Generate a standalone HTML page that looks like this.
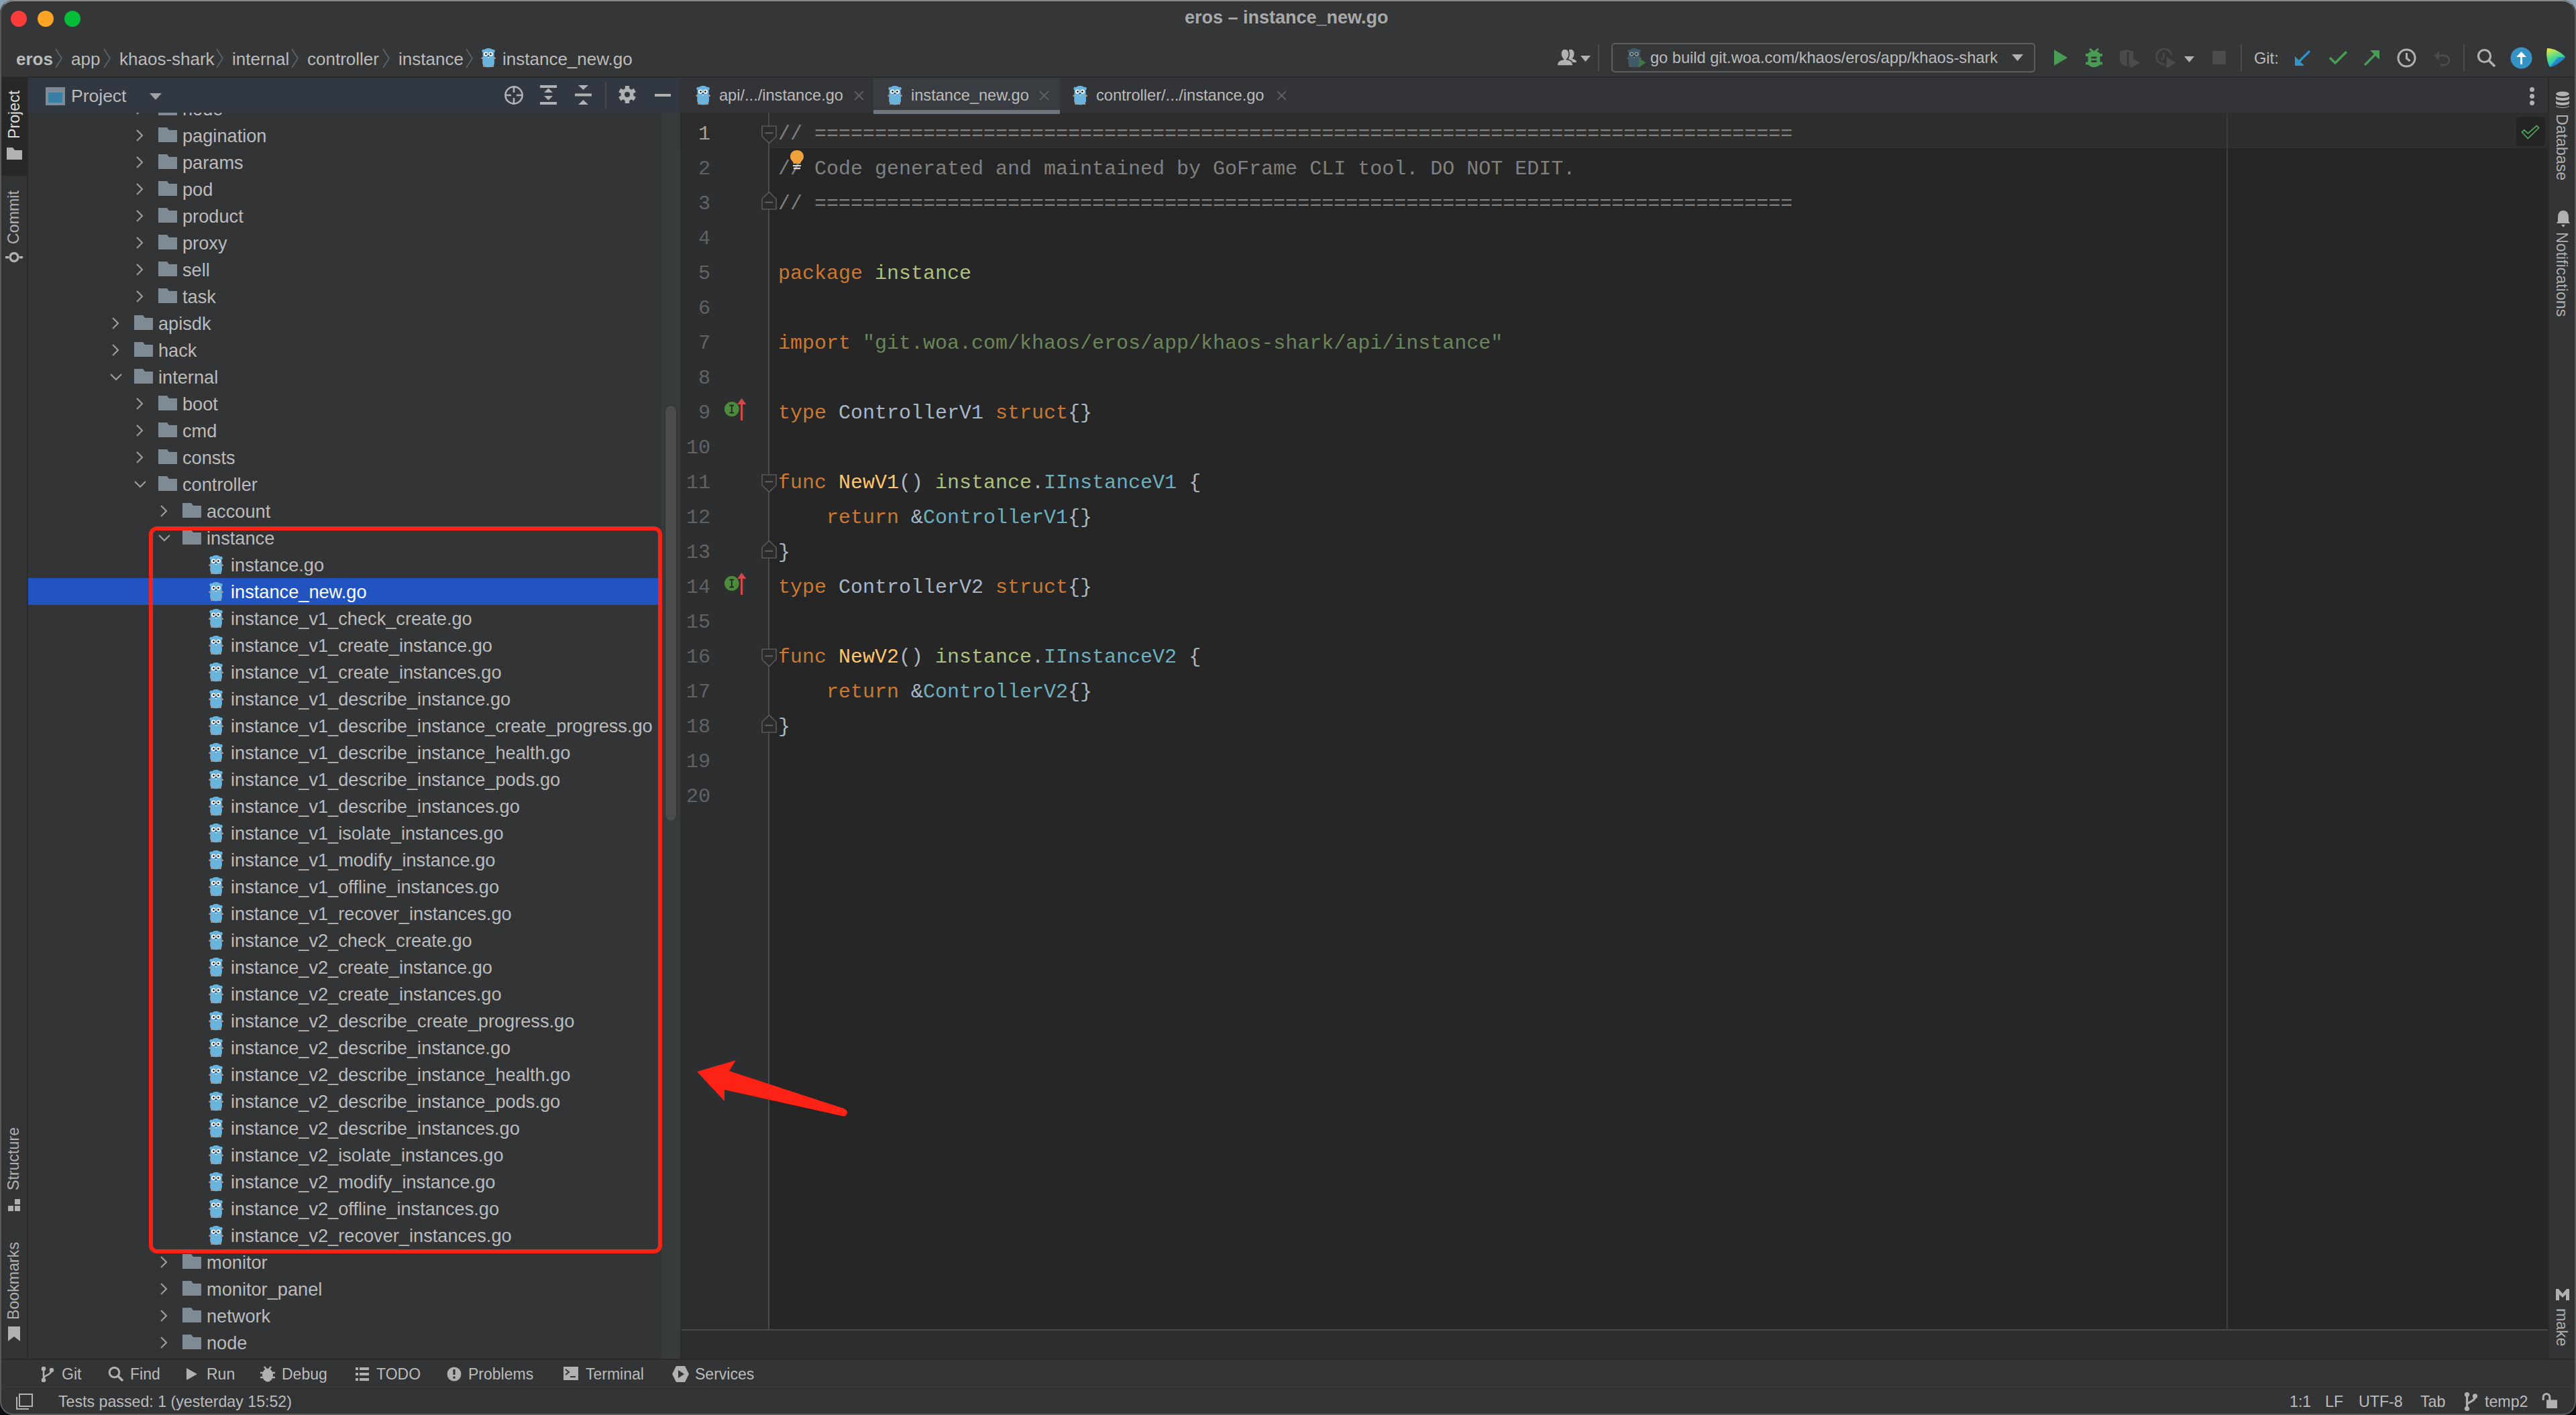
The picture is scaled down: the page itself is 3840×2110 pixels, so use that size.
<!DOCTYPE html><html><head><meta charset="utf-8"><style>html,body{margin:0;padding:0;background:linear-gradient(#8ca0b4 0,#8ca0b4 50%,#0a0e12 50%);overflow:hidden;width:3840px;height:2110px}</style></head><body>
<div style="position:absolute;left:0;top:0;width:3840px;height:2110px;background:#353638;border-radius:20px;overflow:hidden;">
<div style="position:absolute;left:0px;top:0px;width:3840px;height:114px;background:#353638;"></div>
<div style="position:absolute;left:0px;top:0px;width:3840px;height:2px;background:#6a6a6a;"></div>
<div style="position:absolute;left:16px;top:16px;width:24px;height:24px;border-radius:50%;background:#fd3c3c"></div>
<div style="position:absolute;left:56px;top:16px;width:24px;height:24px;border-radius:50%;background:#fda425"></div>
<div style="position:absolute;left:96px;top:16px;width:24px;height:24px;border-radius:50%;background:#03bd38"></div>
<div style="position:absolute;left:1766px;top:11px;font:bold 27px/30px 'Liberation Sans', sans-serif;color:#a9a9aa;white-space:pre;">eros – instance_new.go</div>
<div style="position:absolute;left:24px;top:74px;font:bold 26px/28px 'Liberation Sans', sans-serif;color:#bbbbbb;white-space:pre;">eros</div>
<div style="position:absolute;left:106px;top:74px;font:normal 26px/28px 'Liberation Sans', sans-serif;color:#bbbbbb;white-space:pre;">app</div>
<div style="position:absolute;left:178px;top:74px;font:normal 26px/28px 'Liberation Sans', sans-serif;color:#bbbbbb;white-space:pre;">khaos-shark</div>
<div style="position:absolute;left:346px;top:74px;font:normal 26px/28px 'Liberation Sans', sans-serif;color:#bbbbbb;white-space:pre;">internal</div>
<div style="position:absolute;left:458px;top:74px;font:normal 26px/28px 'Liberation Sans', sans-serif;color:#bbbbbb;white-space:pre;">controller</div>
<div style="position:absolute;left:594px;top:74px;font:normal 26px/28px 'Liberation Sans', sans-serif;color:#bbbbbb;white-space:pre;">instance</div>
<svg style="position:absolute;left:82px;top:72px;" width="12" height="30" viewBox="0 0 12 30"><polyline points="1,1 10,15 1,29" fill="none" stroke="#5b6369" stroke-width="1.8"/></svg>
<svg style="position:absolute;left:154px;top:72px;" width="12" height="30" viewBox="0 0 12 30"><polyline points="1,1 10,15 1,29" fill="none" stroke="#5b6369" stroke-width="1.8"/></svg>
<svg style="position:absolute;left:322px;top:72px;" width="12" height="30" viewBox="0 0 12 30"><polyline points="1,1 10,15 1,29" fill="none" stroke="#5b6369" stroke-width="1.8"/></svg>
<svg style="position:absolute;left:434px;top:72px;" width="12" height="30" viewBox="0 0 12 30"><polyline points="1,1 10,15 1,29" fill="none" stroke="#5b6369" stroke-width="1.8"/></svg>
<svg style="position:absolute;left:570px;top:72px;" width="12" height="30" viewBox="0 0 12 30"><polyline points="1,1 10,15 1,29" fill="none" stroke="#5b6369" stroke-width="1.8"/></svg>
<svg style="position:absolute;left:694px;top:72px;" width="12" height="30" viewBox="0 0 12 30"><polyline points="1,1 10,15 1,29" fill="none" stroke="#5b6369" stroke-width="1.8"/></svg>
<svg style="position:absolute;left:717px;top:71px;" width="23" height="31" viewBox="-2 -1 23 31"><circle cx="1.8" cy="4.2" r="2.4" fill="#6ab3dd"/><circle cx="16.4" cy="4.2" r="2.4" fill="#6ab3dd"/><path d="M0.6,9 C0.6,2.5 4,0 9.1,0 C14.2,0 17.6,2.5 17.6,9 L18,21 C18,27.5 14,28.2 9.1,28.2 C4.2,28.2 0.2,27.5 0.2,21 Z" fill="#6ab3dd"/><circle cx="5.2" cy="8.6" r="3.1" fill="#fff"/><circle cx="12.7" cy="8.6" r="3.1" fill="#fff"/><circle cx="5.5" cy="8.6" r="1.35" fill="#000"/><circle cx="12.4" cy="8.6" r="1.35" fill="#000"/><ellipse cx="9" cy="11.8" rx="1.4" ry="1" fill="#1a1a1a"/><rect x="8.2" y="12.6" width="1.8" height="1.6" fill="#f2f2f2"/><circle cx="-0.3" cy="14.8" r="1.4" fill="#c9967a"/><circle cx="18.5" cy="14.8" r="1.4" fill="#c9967a"/><circle cx="2.5" cy="26.8" r="1.4" fill="#c9967a"/><circle cx="15.7" cy="26.8" r="1.4" fill="#c9967a"/></svg>
<div style="position:absolute;left:749px;top:74px;font:normal 26px/28px 'Liberation Sans', sans-serif;color:#bbbbbb;white-space:pre;">instance_new.go</div>
<div style="position:absolute;left:0px;top:114px;width:3840px;height:2px;background:#2a2a2a;"></div>
<div style="position:absolute;left:0px;top:116px;width:40px;height:1910px;background:#333436;"></div>
<div style="position:absolute;left:2px;top:116px;width:38px;height:146px;background:#282828;"></div>
<div style="position:absolute;left:40px;top:116px;width:2px;height:1910px;background:#2b2b2b;"></div>
<div style="position:absolute;left:42px;top:116px;width:972px;height:52px;background:#313842;"></div>
<div style="position:absolute;left:42px;top:168px;width:972px;height:1858px;background:#333436;"></div>
<div style="position:absolute;left:986px;top:168px;width:28px;height:1858px;background:#383b3c;"></div>
<div style="position:absolute;left:1014px;top:116px;width:2784px;height:52px;background:#333437;"></div>
<div style="position:absolute;left:1014px;top:168px;width:132px;height:1815px;background:#2d2e30;"></div>
<div style="position:absolute;left:1146px;top:168px;width:2652px;height:1815px;background:#262626;"></div>
<div style="position:absolute;left:1014px;top:1983px;width:2784px;height:43px;background:#2c2d2f;"></div>
<div style="position:absolute;left:1016px;top:1982px;width:2782px;height:2px;background:#4a4a4a;"></div>
<div style="position:absolute;left:1145px;top:168px;width:2px;height:1815px;background:#4a4a4a;"></div>
<div style="position:absolute;left:3798px;top:116px;width:42px;height:1910px;background:#333436;"></div>
<div style="position:absolute;left:3798px;top:116px;width:2px;height:1910px;background:#2b2b2c;"></div>
<div style="position:absolute;left:0px;top:2026px;width:3840px;height:42px;background:#333436;"></div>
<div style="position:absolute;left:0px;top:2026px;width:3840px;height:2px;background:#2a2a2a;"></div>
<div style="position:absolute;left:0px;top:2068px;width:3840px;height:42px;background:#333436;"></div>
<div style="position:absolute;left:0px;top:2068px;width:3840px;height:1px;background:#3a3b3d;"></div>
<div style="position:absolute;left:42px;top:168px;width:944px;height:1858px;overflow:hidden">
<svg style="position:absolute;left:160px;top:-16px;" width="12" height="20" viewBox="0 0 12 20"><polyline points="2,2 10,10 2,18" fill="none" stroke="#9a9da0" stroke-width="2.2"/></svg>
<svg style="position:absolute;left:194px;top:-18px;" width="28" height="22" viewBox="0 0 28 22"><path d="M0,0 H13 L16,4 H28 V22 H0 Z" fill="#7f8b94"/></svg>
<div style="position:absolute;left:230px;top:-21px;font:normal 27.2px/32px 'Liberation Sans', sans-serif;color:#bbbbbb;white-space:pre;">node</div>
<svg style="position:absolute;left:160px;top:24px;" width="12" height="20" viewBox="0 0 12 20"><polyline points="2,2 10,10 2,18" fill="none" stroke="#9a9da0" stroke-width="2.2"/></svg>
<svg style="position:absolute;left:194px;top:22px;" width="28" height="22" viewBox="0 0 28 22"><path d="M0,0 H13 L16,4 H28 V22 H0 Z" fill="#7f8b94"/></svg>
<div style="position:absolute;left:230px;top:19px;font:normal 27.2px/32px 'Liberation Sans', sans-serif;color:#bbbbbb;white-space:pre;">pagination</div>
<svg style="position:absolute;left:160px;top:64px;" width="12" height="20" viewBox="0 0 12 20"><polyline points="2,2 10,10 2,18" fill="none" stroke="#9a9da0" stroke-width="2.2"/></svg>
<svg style="position:absolute;left:194px;top:62px;" width="28" height="22" viewBox="0 0 28 22"><path d="M0,0 H13 L16,4 H28 V22 H0 Z" fill="#7f8b94"/></svg>
<div style="position:absolute;left:230px;top:59px;font:normal 27.2px/32px 'Liberation Sans', sans-serif;color:#bbbbbb;white-space:pre;">params</div>
<svg style="position:absolute;left:160px;top:104px;" width="12" height="20" viewBox="0 0 12 20"><polyline points="2,2 10,10 2,18" fill="none" stroke="#9a9da0" stroke-width="2.2"/></svg>
<svg style="position:absolute;left:194px;top:102px;" width="28" height="22" viewBox="0 0 28 22"><path d="M0,0 H13 L16,4 H28 V22 H0 Z" fill="#7f8b94"/></svg>
<div style="position:absolute;left:230px;top:99px;font:normal 27.2px/32px 'Liberation Sans', sans-serif;color:#bbbbbb;white-space:pre;">pod</div>
<svg style="position:absolute;left:160px;top:144px;" width="12" height="20" viewBox="0 0 12 20"><polyline points="2,2 10,10 2,18" fill="none" stroke="#9a9da0" stroke-width="2.2"/></svg>
<svg style="position:absolute;left:194px;top:142px;" width="28" height="22" viewBox="0 0 28 22"><path d="M0,0 H13 L16,4 H28 V22 H0 Z" fill="#7f8b94"/></svg>
<div style="position:absolute;left:230px;top:139px;font:normal 27.2px/32px 'Liberation Sans', sans-serif;color:#bbbbbb;white-space:pre;">product</div>
<svg style="position:absolute;left:160px;top:184px;" width="12" height="20" viewBox="0 0 12 20"><polyline points="2,2 10,10 2,18" fill="none" stroke="#9a9da0" stroke-width="2.2"/></svg>
<svg style="position:absolute;left:194px;top:182px;" width="28" height="22" viewBox="0 0 28 22"><path d="M0,0 H13 L16,4 H28 V22 H0 Z" fill="#7f8b94"/></svg>
<div style="position:absolute;left:230px;top:179px;font:normal 27.2px/32px 'Liberation Sans', sans-serif;color:#bbbbbb;white-space:pre;">proxy</div>
<svg style="position:absolute;left:160px;top:224px;" width="12" height="20" viewBox="0 0 12 20"><polyline points="2,2 10,10 2,18" fill="none" stroke="#9a9da0" stroke-width="2.2"/></svg>
<svg style="position:absolute;left:194px;top:222px;" width="28" height="22" viewBox="0 0 28 22"><path d="M0,0 H13 L16,4 H28 V22 H0 Z" fill="#7f8b94"/></svg>
<div style="position:absolute;left:230px;top:219px;font:normal 27.2px/32px 'Liberation Sans', sans-serif;color:#bbbbbb;white-space:pre;">sell</div>
<svg style="position:absolute;left:160px;top:264px;" width="12" height="20" viewBox="0 0 12 20"><polyline points="2,2 10,10 2,18" fill="none" stroke="#9a9da0" stroke-width="2.2"/></svg>
<svg style="position:absolute;left:194px;top:262px;" width="28" height="22" viewBox="0 0 28 22"><path d="M0,0 H13 L16,4 H28 V22 H0 Z" fill="#7f8b94"/></svg>
<div style="position:absolute;left:230px;top:259px;font:normal 27.2px/32px 'Liberation Sans', sans-serif;color:#bbbbbb;white-space:pre;">task</div>
<svg style="position:absolute;left:124px;top:304px;" width="12" height="20" viewBox="0 0 12 20"><polyline points="2,2 10,10 2,18" fill="none" stroke="#9a9da0" stroke-width="2.2"/></svg>
<svg style="position:absolute;left:158px;top:302px;" width="28" height="22" viewBox="0 0 28 22"><path d="M0,0 H13 L16,4 H28 V22 H0 Z" fill="#7f8b94"/></svg>
<div style="position:absolute;left:194px;top:299px;font:normal 27.2px/32px 'Liberation Sans', sans-serif;color:#bbbbbb;white-space:pre;">apisdk</div>
<svg style="position:absolute;left:124px;top:344px;" width="12" height="20" viewBox="0 0 12 20"><polyline points="2,2 10,10 2,18" fill="none" stroke="#9a9da0" stroke-width="2.2"/></svg>
<svg style="position:absolute;left:158px;top:342px;" width="28" height="22" viewBox="0 0 28 22"><path d="M0,0 H13 L16,4 H28 V22 H0 Z" fill="#7f8b94"/></svg>
<div style="position:absolute;left:194px;top:339px;font:normal 27.2px/32px 'Liberation Sans', sans-serif;color:#bbbbbb;white-space:pre;">hack</div>
<svg style="position:absolute;left:121px;top:388px;" width="20" height="12" viewBox="0 0 20 12"><polyline points="2,2 10,10 18,2" fill="none" stroke="#9a9da0" stroke-width="2.2"/></svg>
<svg style="position:absolute;left:158px;top:382px;" width="28" height="22" viewBox="0 0 28 22"><path d="M0,0 H13 L16,4 H28 V22 H0 Z" fill="#7f8b94"/></svg>
<div style="position:absolute;left:194px;top:379px;font:normal 27.2px/32px 'Liberation Sans', sans-serif;color:#bbbbbb;white-space:pre;">internal</div>
<svg style="position:absolute;left:160px;top:424px;" width="12" height="20" viewBox="0 0 12 20"><polyline points="2,2 10,10 2,18" fill="none" stroke="#9a9da0" stroke-width="2.2"/></svg>
<svg style="position:absolute;left:194px;top:422px;" width="28" height="22" viewBox="0 0 28 22"><path d="M0,0 H13 L16,4 H28 V22 H0 Z" fill="#7f8b94"/></svg>
<div style="position:absolute;left:230px;top:419px;font:normal 27.2px/32px 'Liberation Sans', sans-serif;color:#bbbbbb;white-space:pre;">boot</div>
<svg style="position:absolute;left:160px;top:464px;" width="12" height="20" viewBox="0 0 12 20"><polyline points="2,2 10,10 2,18" fill="none" stroke="#9a9da0" stroke-width="2.2"/></svg>
<svg style="position:absolute;left:194px;top:462px;" width="28" height="22" viewBox="0 0 28 22"><path d="M0,0 H13 L16,4 H28 V22 H0 Z" fill="#7f8b94"/></svg>
<div style="position:absolute;left:230px;top:459px;font:normal 27.2px/32px 'Liberation Sans', sans-serif;color:#bbbbbb;white-space:pre;">cmd</div>
<svg style="position:absolute;left:160px;top:504px;" width="12" height="20" viewBox="0 0 12 20"><polyline points="2,2 10,10 2,18" fill="none" stroke="#9a9da0" stroke-width="2.2"/></svg>
<svg style="position:absolute;left:194px;top:502px;" width="28" height="22" viewBox="0 0 28 22"><path d="M0,0 H13 L16,4 H28 V22 H0 Z" fill="#7f8b94"/></svg>
<div style="position:absolute;left:230px;top:499px;font:normal 27.2px/32px 'Liberation Sans', sans-serif;color:#bbbbbb;white-space:pre;">consts</div>
<svg style="position:absolute;left:157px;top:548px;" width="20" height="12" viewBox="0 0 20 12"><polyline points="2,2 10,10 18,2" fill="none" stroke="#9a9da0" stroke-width="2.2"/></svg>
<svg style="position:absolute;left:194px;top:542px;" width="28" height="22" viewBox="0 0 28 22"><path d="M0,0 H13 L16,4 H28 V22 H0 Z" fill="#7f8b94"/></svg>
<div style="position:absolute;left:230px;top:539px;font:normal 27.2px/32px 'Liberation Sans', sans-serif;color:#bbbbbb;white-space:pre;">controller</div>
<svg style="position:absolute;left:196px;top:584px;" width="12" height="20" viewBox="0 0 12 20"><polyline points="2,2 10,10 2,18" fill="none" stroke="#9a9da0" stroke-width="2.2"/></svg>
<svg style="position:absolute;left:230px;top:582px;" width="28" height="22" viewBox="0 0 28 22"><path d="M0,0 H13 L16,4 H28 V22 H0 Z" fill="#7f8b94"/></svg>
<div style="position:absolute;left:266px;top:579px;font:normal 27.2px/32px 'Liberation Sans', sans-serif;color:#bbbbbb;white-space:pre;">account</div>
<svg style="position:absolute;left:193px;top:628px;" width="20" height="12" viewBox="0 0 20 12"><polyline points="2,2 10,10 18,2" fill="none" stroke="#9a9da0" stroke-width="2.2"/></svg>
<svg style="position:absolute;left:230px;top:622px;" width="28" height="22" viewBox="0 0 28 22"><path d="M0,0 H13 L16,4 H28 V22 H0 Z" fill="#7f8b94"/></svg>
<div style="position:absolute;left:266px;top:619px;font:normal 27.2px/32px 'Liberation Sans', sans-serif;color:#bbbbbb;white-space:pre;">instance</div>
<svg style="position:absolute;left:269px;top:659px;" width="23" height="31" viewBox="-2 -1 23 31"><circle cx="1.8" cy="4.2" r="2.4" fill="#6ab3dd"/><circle cx="16.4" cy="4.2" r="2.4" fill="#6ab3dd"/><path d="M0.6,9 C0.6,2.5 4,0 9.1,0 C14.2,0 17.6,2.5 17.6,9 L18,21 C18,27.5 14,28.2 9.1,28.2 C4.2,28.2 0.2,27.5 0.2,21 Z" fill="#6ab3dd"/><circle cx="5.2" cy="8.6" r="3.1" fill="#fff"/><circle cx="12.7" cy="8.6" r="3.1" fill="#fff"/><circle cx="5.5" cy="8.6" r="1.35" fill="#000"/><circle cx="12.4" cy="8.6" r="1.35" fill="#000"/><ellipse cx="9" cy="11.8" rx="1.4" ry="1" fill="#1a1a1a"/><rect x="8.2" y="12.6" width="1.8" height="1.6" fill="#f2f2f2"/><circle cx="-0.3" cy="14.8" r="1.4" fill="#c9967a"/><circle cx="18.5" cy="14.8" r="1.4" fill="#c9967a"/><circle cx="2.5" cy="26.8" r="1.4" fill="#c9967a"/><circle cx="15.7" cy="26.8" r="1.4" fill="#c9967a"/></svg>
<div style="position:absolute;left:302px;top:659px;font:normal 27.2px/32px 'Liberation Sans', sans-serif;color:#bbbbbb;white-space:pre;">instance.go</div>
<div style="position:absolute;left:0px;top:694px;width:945px;height:40px;background:#2154c0;"></div>
<svg style="position:absolute;left:269px;top:699px;" width="23" height="31" viewBox="-2 -1 23 31"><circle cx="1.8" cy="4.2" r="2.4" fill="#6ab3dd"/><circle cx="16.4" cy="4.2" r="2.4" fill="#6ab3dd"/><path d="M0.6,9 C0.6,2.5 4,0 9.1,0 C14.2,0 17.6,2.5 17.6,9 L18,21 C18,27.5 14,28.2 9.1,28.2 C4.2,28.2 0.2,27.5 0.2,21 Z" fill="#6ab3dd"/><circle cx="5.2" cy="8.6" r="3.1" fill="#fff"/><circle cx="12.7" cy="8.6" r="3.1" fill="#fff"/><circle cx="5.5" cy="8.6" r="1.35" fill="#000"/><circle cx="12.4" cy="8.6" r="1.35" fill="#000"/><ellipse cx="9" cy="11.8" rx="1.4" ry="1" fill="#1a1a1a"/><rect x="8.2" y="12.6" width="1.8" height="1.6" fill="#f2f2f2"/><circle cx="-0.3" cy="14.8" r="1.4" fill="#c9967a"/><circle cx="18.5" cy="14.8" r="1.4" fill="#c9967a"/><circle cx="2.5" cy="26.8" r="1.4" fill="#c9967a"/><circle cx="15.7" cy="26.8" r="1.4" fill="#c9967a"/></svg>
<div style="position:absolute;left:302px;top:699px;font:normal 27.2px/32px 'Liberation Sans', sans-serif;color:#ffffff;white-space:pre;">instance_new.go</div>
<svg style="position:absolute;left:269px;top:739px;" width="23" height="31" viewBox="-2 -1 23 31"><circle cx="1.8" cy="4.2" r="2.4" fill="#6ab3dd"/><circle cx="16.4" cy="4.2" r="2.4" fill="#6ab3dd"/><path d="M0.6,9 C0.6,2.5 4,0 9.1,0 C14.2,0 17.6,2.5 17.6,9 L18,21 C18,27.5 14,28.2 9.1,28.2 C4.2,28.2 0.2,27.5 0.2,21 Z" fill="#6ab3dd"/><circle cx="5.2" cy="8.6" r="3.1" fill="#fff"/><circle cx="12.7" cy="8.6" r="3.1" fill="#fff"/><circle cx="5.5" cy="8.6" r="1.35" fill="#000"/><circle cx="12.4" cy="8.6" r="1.35" fill="#000"/><ellipse cx="9" cy="11.8" rx="1.4" ry="1" fill="#1a1a1a"/><rect x="8.2" y="12.6" width="1.8" height="1.6" fill="#f2f2f2"/><circle cx="-0.3" cy="14.8" r="1.4" fill="#c9967a"/><circle cx="18.5" cy="14.8" r="1.4" fill="#c9967a"/><circle cx="2.5" cy="26.8" r="1.4" fill="#c9967a"/><circle cx="15.7" cy="26.8" r="1.4" fill="#c9967a"/></svg>
<div style="position:absolute;left:302px;top:739px;font:normal 27.2px/32px 'Liberation Sans', sans-serif;color:#bbbbbb;white-space:pre;">instance_v1_check_create.go</div>
<svg style="position:absolute;left:269px;top:779px;" width="23" height="31" viewBox="-2 -1 23 31"><circle cx="1.8" cy="4.2" r="2.4" fill="#6ab3dd"/><circle cx="16.4" cy="4.2" r="2.4" fill="#6ab3dd"/><path d="M0.6,9 C0.6,2.5 4,0 9.1,0 C14.2,0 17.6,2.5 17.6,9 L18,21 C18,27.5 14,28.2 9.1,28.2 C4.2,28.2 0.2,27.5 0.2,21 Z" fill="#6ab3dd"/><circle cx="5.2" cy="8.6" r="3.1" fill="#fff"/><circle cx="12.7" cy="8.6" r="3.1" fill="#fff"/><circle cx="5.5" cy="8.6" r="1.35" fill="#000"/><circle cx="12.4" cy="8.6" r="1.35" fill="#000"/><ellipse cx="9" cy="11.8" rx="1.4" ry="1" fill="#1a1a1a"/><rect x="8.2" y="12.6" width="1.8" height="1.6" fill="#f2f2f2"/><circle cx="-0.3" cy="14.8" r="1.4" fill="#c9967a"/><circle cx="18.5" cy="14.8" r="1.4" fill="#c9967a"/><circle cx="2.5" cy="26.8" r="1.4" fill="#c9967a"/><circle cx="15.7" cy="26.8" r="1.4" fill="#c9967a"/></svg>
<div style="position:absolute;left:302px;top:779px;font:normal 27.2px/32px 'Liberation Sans', sans-serif;color:#bbbbbb;white-space:pre;">instance_v1_create_instance.go</div>
<svg style="position:absolute;left:269px;top:819px;" width="23" height="31" viewBox="-2 -1 23 31"><circle cx="1.8" cy="4.2" r="2.4" fill="#6ab3dd"/><circle cx="16.4" cy="4.2" r="2.4" fill="#6ab3dd"/><path d="M0.6,9 C0.6,2.5 4,0 9.1,0 C14.2,0 17.6,2.5 17.6,9 L18,21 C18,27.5 14,28.2 9.1,28.2 C4.2,28.2 0.2,27.5 0.2,21 Z" fill="#6ab3dd"/><circle cx="5.2" cy="8.6" r="3.1" fill="#fff"/><circle cx="12.7" cy="8.6" r="3.1" fill="#fff"/><circle cx="5.5" cy="8.6" r="1.35" fill="#000"/><circle cx="12.4" cy="8.6" r="1.35" fill="#000"/><ellipse cx="9" cy="11.8" rx="1.4" ry="1" fill="#1a1a1a"/><rect x="8.2" y="12.6" width="1.8" height="1.6" fill="#f2f2f2"/><circle cx="-0.3" cy="14.8" r="1.4" fill="#c9967a"/><circle cx="18.5" cy="14.8" r="1.4" fill="#c9967a"/><circle cx="2.5" cy="26.8" r="1.4" fill="#c9967a"/><circle cx="15.7" cy="26.8" r="1.4" fill="#c9967a"/></svg>
<div style="position:absolute;left:302px;top:819px;font:normal 27.2px/32px 'Liberation Sans', sans-serif;color:#bbbbbb;white-space:pre;">instance_v1_create_instances.go</div>
<svg style="position:absolute;left:269px;top:859px;" width="23" height="31" viewBox="-2 -1 23 31"><circle cx="1.8" cy="4.2" r="2.4" fill="#6ab3dd"/><circle cx="16.4" cy="4.2" r="2.4" fill="#6ab3dd"/><path d="M0.6,9 C0.6,2.5 4,0 9.1,0 C14.2,0 17.6,2.5 17.6,9 L18,21 C18,27.5 14,28.2 9.1,28.2 C4.2,28.2 0.2,27.5 0.2,21 Z" fill="#6ab3dd"/><circle cx="5.2" cy="8.6" r="3.1" fill="#fff"/><circle cx="12.7" cy="8.6" r="3.1" fill="#fff"/><circle cx="5.5" cy="8.6" r="1.35" fill="#000"/><circle cx="12.4" cy="8.6" r="1.35" fill="#000"/><ellipse cx="9" cy="11.8" rx="1.4" ry="1" fill="#1a1a1a"/><rect x="8.2" y="12.6" width="1.8" height="1.6" fill="#f2f2f2"/><circle cx="-0.3" cy="14.8" r="1.4" fill="#c9967a"/><circle cx="18.5" cy="14.8" r="1.4" fill="#c9967a"/><circle cx="2.5" cy="26.8" r="1.4" fill="#c9967a"/><circle cx="15.7" cy="26.8" r="1.4" fill="#c9967a"/></svg>
<div style="position:absolute;left:302px;top:859px;font:normal 27.2px/32px 'Liberation Sans', sans-serif;color:#bbbbbb;white-space:pre;">instance_v1_describe_instance.go</div>
<svg style="position:absolute;left:269px;top:899px;" width="23" height="31" viewBox="-2 -1 23 31"><circle cx="1.8" cy="4.2" r="2.4" fill="#6ab3dd"/><circle cx="16.4" cy="4.2" r="2.4" fill="#6ab3dd"/><path d="M0.6,9 C0.6,2.5 4,0 9.1,0 C14.2,0 17.6,2.5 17.6,9 L18,21 C18,27.5 14,28.2 9.1,28.2 C4.2,28.2 0.2,27.5 0.2,21 Z" fill="#6ab3dd"/><circle cx="5.2" cy="8.6" r="3.1" fill="#fff"/><circle cx="12.7" cy="8.6" r="3.1" fill="#fff"/><circle cx="5.5" cy="8.6" r="1.35" fill="#000"/><circle cx="12.4" cy="8.6" r="1.35" fill="#000"/><ellipse cx="9" cy="11.8" rx="1.4" ry="1" fill="#1a1a1a"/><rect x="8.2" y="12.6" width="1.8" height="1.6" fill="#f2f2f2"/><circle cx="-0.3" cy="14.8" r="1.4" fill="#c9967a"/><circle cx="18.5" cy="14.8" r="1.4" fill="#c9967a"/><circle cx="2.5" cy="26.8" r="1.4" fill="#c9967a"/><circle cx="15.7" cy="26.8" r="1.4" fill="#c9967a"/></svg>
<div style="position:absolute;left:302px;top:899px;font:normal 27.2px/32px 'Liberation Sans', sans-serif;color:#bbbbbb;white-space:pre;">instance_v1_describe_instance_create_progress.go</div>
<svg style="position:absolute;left:269px;top:939px;" width="23" height="31" viewBox="-2 -1 23 31"><circle cx="1.8" cy="4.2" r="2.4" fill="#6ab3dd"/><circle cx="16.4" cy="4.2" r="2.4" fill="#6ab3dd"/><path d="M0.6,9 C0.6,2.5 4,0 9.1,0 C14.2,0 17.6,2.5 17.6,9 L18,21 C18,27.5 14,28.2 9.1,28.2 C4.2,28.2 0.2,27.5 0.2,21 Z" fill="#6ab3dd"/><circle cx="5.2" cy="8.6" r="3.1" fill="#fff"/><circle cx="12.7" cy="8.6" r="3.1" fill="#fff"/><circle cx="5.5" cy="8.6" r="1.35" fill="#000"/><circle cx="12.4" cy="8.6" r="1.35" fill="#000"/><ellipse cx="9" cy="11.8" rx="1.4" ry="1" fill="#1a1a1a"/><rect x="8.2" y="12.6" width="1.8" height="1.6" fill="#f2f2f2"/><circle cx="-0.3" cy="14.8" r="1.4" fill="#c9967a"/><circle cx="18.5" cy="14.8" r="1.4" fill="#c9967a"/><circle cx="2.5" cy="26.8" r="1.4" fill="#c9967a"/><circle cx="15.7" cy="26.8" r="1.4" fill="#c9967a"/></svg>
<div style="position:absolute;left:302px;top:939px;font:normal 27.2px/32px 'Liberation Sans', sans-serif;color:#bbbbbb;white-space:pre;">instance_v1_describe_instance_health.go</div>
<svg style="position:absolute;left:269px;top:979px;" width="23" height="31" viewBox="-2 -1 23 31"><circle cx="1.8" cy="4.2" r="2.4" fill="#6ab3dd"/><circle cx="16.4" cy="4.2" r="2.4" fill="#6ab3dd"/><path d="M0.6,9 C0.6,2.5 4,0 9.1,0 C14.2,0 17.6,2.5 17.6,9 L18,21 C18,27.5 14,28.2 9.1,28.2 C4.2,28.2 0.2,27.5 0.2,21 Z" fill="#6ab3dd"/><circle cx="5.2" cy="8.6" r="3.1" fill="#fff"/><circle cx="12.7" cy="8.6" r="3.1" fill="#fff"/><circle cx="5.5" cy="8.6" r="1.35" fill="#000"/><circle cx="12.4" cy="8.6" r="1.35" fill="#000"/><ellipse cx="9" cy="11.8" rx="1.4" ry="1" fill="#1a1a1a"/><rect x="8.2" y="12.6" width="1.8" height="1.6" fill="#f2f2f2"/><circle cx="-0.3" cy="14.8" r="1.4" fill="#c9967a"/><circle cx="18.5" cy="14.8" r="1.4" fill="#c9967a"/><circle cx="2.5" cy="26.8" r="1.4" fill="#c9967a"/><circle cx="15.7" cy="26.8" r="1.4" fill="#c9967a"/></svg>
<div style="position:absolute;left:302px;top:979px;font:normal 27.2px/32px 'Liberation Sans', sans-serif;color:#bbbbbb;white-space:pre;">instance_v1_describe_instance_pods.go</div>
<svg style="position:absolute;left:269px;top:1019px;" width="23" height="31" viewBox="-2 -1 23 31"><circle cx="1.8" cy="4.2" r="2.4" fill="#6ab3dd"/><circle cx="16.4" cy="4.2" r="2.4" fill="#6ab3dd"/><path d="M0.6,9 C0.6,2.5 4,0 9.1,0 C14.2,0 17.6,2.5 17.6,9 L18,21 C18,27.5 14,28.2 9.1,28.2 C4.2,28.2 0.2,27.5 0.2,21 Z" fill="#6ab3dd"/><circle cx="5.2" cy="8.6" r="3.1" fill="#fff"/><circle cx="12.7" cy="8.6" r="3.1" fill="#fff"/><circle cx="5.5" cy="8.6" r="1.35" fill="#000"/><circle cx="12.4" cy="8.6" r="1.35" fill="#000"/><ellipse cx="9" cy="11.8" rx="1.4" ry="1" fill="#1a1a1a"/><rect x="8.2" y="12.6" width="1.8" height="1.6" fill="#f2f2f2"/><circle cx="-0.3" cy="14.8" r="1.4" fill="#c9967a"/><circle cx="18.5" cy="14.8" r="1.4" fill="#c9967a"/><circle cx="2.5" cy="26.8" r="1.4" fill="#c9967a"/><circle cx="15.7" cy="26.8" r="1.4" fill="#c9967a"/></svg>
<div style="position:absolute;left:302px;top:1019px;font:normal 27.2px/32px 'Liberation Sans', sans-serif;color:#bbbbbb;white-space:pre;">instance_v1_describe_instances.go</div>
<svg style="position:absolute;left:269px;top:1059px;" width="23" height="31" viewBox="-2 -1 23 31"><circle cx="1.8" cy="4.2" r="2.4" fill="#6ab3dd"/><circle cx="16.4" cy="4.2" r="2.4" fill="#6ab3dd"/><path d="M0.6,9 C0.6,2.5 4,0 9.1,0 C14.2,0 17.6,2.5 17.6,9 L18,21 C18,27.5 14,28.2 9.1,28.2 C4.2,28.2 0.2,27.5 0.2,21 Z" fill="#6ab3dd"/><circle cx="5.2" cy="8.6" r="3.1" fill="#fff"/><circle cx="12.7" cy="8.6" r="3.1" fill="#fff"/><circle cx="5.5" cy="8.6" r="1.35" fill="#000"/><circle cx="12.4" cy="8.6" r="1.35" fill="#000"/><ellipse cx="9" cy="11.8" rx="1.4" ry="1" fill="#1a1a1a"/><rect x="8.2" y="12.6" width="1.8" height="1.6" fill="#f2f2f2"/><circle cx="-0.3" cy="14.8" r="1.4" fill="#c9967a"/><circle cx="18.5" cy="14.8" r="1.4" fill="#c9967a"/><circle cx="2.5" cy="26.8" r="1.4" fill="#c9967a"/><circle cx="15.7" cy="26.8" r="1.4" fill="#c9967a"/></svg>
<div style="position:absolute;left:302px;top:1059px;font:normal 27.2px/32px 'Liberation Sans', sans-serif;color:#bbbbbb;white-space:pre;">instance_v1_isolate_instances.go</div>
<svg style="position:absolute;left:269px;top:1099px;" width="23" height="31" viewBox="-2 -1 23 31"><circle cx="1.8" cy="4.2" r="2.4" fill="#6ab3dd"/><circle cx="16.4" cy="4.2" r="2.4" fill="#6ab3dd"/><path d="M0.6,9 C0.6,2.5 4,0 9.1,0 C14.2,0 17.6,2.5 17.6,9 L18,21 C18,27.5 14,28.2 9.1,28.2 C4.2,28.2 0.2,27.5 0.2,21 Z" fill="#6ab3dd"/><circle cx="5.2" cy="8.6" r="3.1" fill="#fff"/><circle cx="12.7" cy="8.6" r="3.1" fill="#fff"/><circle cx="5.5" cy="8.6" r="1.35" fill="#000"/><circle cx="12.4" cy="8.6" r="1.35" fill="#000"/><ellipse cx="9" cy="11.8" rx="1.4" ry="1" fill="#1a1a1a"/><rect x="8.2" y="12.6" width="1.8" height="1.6" fill="#f2f2f2"/><circle cx="-0.3" cy="14.8" r="1.4" fill="#c9967a"/><circle cx="18.5" cy="14.8" r="1.4" fill="#c9967a"/><circle cx="2.5" cy="26.8" r="1.4" fill="#c9967a"/><circle cx="15.7" cy="26.8" r="1.4" fill="#c9967a"/></svg>
<div style="position:absolute;left:302px;top:1099px;font:normal 27.2px/32px 'Liberation Sans', sans-serif;color:#bbbbbb;white-space:pre;">instance_v1_modify_instance.go</div>
<svg style="position:absolute;left:269px;top:1139px;" width="23" height="31" viewBox="-2 -1 23 31"><circle cx="1.8" cy="4.2" r="2.4" fill="#6ab3dd"/><circle cx="16.4" cy="4.2" r="2.4" fill="#6ab3dd"/><path d="M0.6,9 C0.6,2.5 4,0 9.1,0 C14.2,0 17.6,2.5 17.6,9 L18,21 C18,27.5 14,28.2 9.1,28.2 C4.2,28.2 0.2,27.5 0.2,21 Z" fill="#6ab3dd"/><circle cx="5.2" cy="8.6" r="3.1" fill="#fff"/><circle cx="12.7" cy="8.6" r="3.1" fill="#fff"/><circle cx="5.5" cy="8.6" r="1.35" fill="#000"/><circle cx="12.4" cy="8.6" r="1.35" fill="#000"/><ellipse cx="9" cy="11.8" rx="1.4" ry="1" fill="#1a1a1a"/><rect x="8.2" y="12.6" width="1.8" height="1.6" fill="#f2f2f2"/><circle cx="-0.3" cy="14.8" r="1.4" fill="#c9967a"/><circle cx="18.5" cy="14.8" r="1.4" fill="#c9967a"/><circle cx="2.5" cy="26.8" r="1.4" fill="#c9967a"/><circle cx="15.7" cy="26.8" r="1.4" fill="#c9967a"/></svg>
<div style="position:absolute;left:302px;top:1139px;font:normal 27.2px/32px 'Liberation Sans', sans-serif;color:#bbbbbb;white-space:pre;">instance_v1_offline_instances.go</div>
<svg style="position:absolute;left:269px;top:1179px;" width="23" height="31" viewBox="-2 -1 23 31"><circle cx="1.8" cy="4.2" r="2.4" fill="#6ab3dd"/><circle cx="16.4" cy="4.2" r="2.4" fill="#6ab3dd"/><path d="M0.6,9 C0.6,2.5 4,0 9.1,0 C14.2,0 17.6,2.5 17.6,9 L18,21 C18,27.5 14,28.2 9.1,28.2 C4.2,28.2 0.2,27.5 0.2,21 Z" fill="#6ab3dd"/><circle cx="5.2" cy="8.6" r="3.1" fill="#fff"/><circle cx="12.7" cy="8.6" r="3.1" fill="#fff"/><circle cx="5.5" cy="8.6" r="1.35" fill="#000"/><circle cx="12.4" cy="8.6" r="1.35" fill="#000"/><ellipse cx="9" cy="11.8" rx="1.4" ry="1" fill="#1a1a1a"/><rect x="8.2" y="12.6" width="1.8" height="1.6" fill="#f2f2f2"/><circle cx="-0.3" cy="14.8" r="1.4" fill="#c9967a"/><circle cx="18.5" cy="14.8" r="1.4" fill="#c9967a"/><circle cx="2.5" cy="26.8" r="1.4" fill="#c9967a"/><circle cx="15.7" cy="26.8" r="1.4" fill="#c9967a"/></svg>
<div style="position:absolute;left:302px;top:1179px;font:normal 27.2px/32px 'Liberation Sans', sans-serif;color:#bbbbbb;white-space:pre;">instance_v1_recover_instances.go</div>
<svg style="position:absolute;left:269px;top:1219px;" width="23" height="31" viewBox="-2 -1 23 31"><circle cx="1.8" cy="4.2" r="2.4" fill="#6ab3dd"/><circle cx="16.4" cy="4.2" r="2.4" fill="#6ab3dd"/><path d="M0.6,9 C0.6,2.5 4,0 9.1,0 C14.2,0 17.6,2.5 17.6,9 L18,21 C18,27.5 14,28.2 9.1,28.2 C4.2,28.2 0.2,27.5 0.2,21 Z" fill="#6ab3dd"/><circle cx="5.2" cy="8.6" r="3.1" fill="#fff"/><circle cx="12.7" cy="8.6" r="3.1" fill="#fff"/><circle cx="5.5" cy="8.6" r="1.35" fill="#000"/><circle cx="12.4" cy="8.6" r="1.35" fill="#000"/><ellipse cx="9" cy="11.8" rx="1.4" ry="1" fill="#1a1a1a"/><rect x="8.2" y="12.6" width="1.8" height="1.6" fill="#f2f2f2"/><circle cx="-0.3" cy="14.8" r="1.4" fill="#c9967a"/><circle cx="18.5" cy="14.8" r="1.4" fill="#c9967a"/><circle cx="2.5" cy="26.8" r="1.4" fill="#c9967a"/><circle cx="15.7" cy="26.8" r="1.4" fill="#c9967a"/></svg>
<div style="position:absolute;left:302px;top:1219px;font:normal 27.2px/32px 'Liberation Sans', sans-serif;color:#bbbbbb;white-space:pre;">instance_v2_check_create.go</div>
<svg style="position:absolute;left:269px;top:1259px;" width="23" height="31" viewBox="-2 -1 23 31"><circle cx="1.8" cy="4.2" r="2.4" fill="#6ab3dd"/><circle cx="16.4" cy="4.2" r="2.4" fill="#6ab3dd"/><path d="M0.6,9 C0.6,2.5 4,0 9.1,0 C14.2,0 17.6,2.5 17.6,9 L18,21 C18,27.5 14,28.2 9.1,28.2 C4.2,28.2 0.2,27.5 0.2,21 Z" fill="#6ab3dd"/><circle cx="5.2" cy="8.6" r="3.1" fill="#fff"/><circle cx="12.7" cy="8.6" r="3.1" fill="#fff"/><circle cx="5.5" cy="8.6" r="1.35" fill="#000"/><circle cx="12.4" cy="8.6" r="1.35" fill="#000"/><ellipse cx="9" cy="11.8" rx="1.4" ry="1" fill="#1a1a1a"/><rect x="8.2" y="12.6" width="1.8" height="1.6" fill="#f2f2f2"/><circle cx="-0.3" cy="14.8" r="1.4" fill="#c9967a"/><circle cx="18.5" cy="14.8" r="1.4" fill="#c9967a"/><circle cx="2.5" cy="26.8" r="1.4" fill="#c9967a"/><circle cx="15.7" cy="26.8" r="1.4" fill="#c9967a"/></svg>
<div style="position:absolute;left:302px;top:1259px;font:normal 27.2px/32px 'Liberation Sans', sans-serif;color:#bbbbbb;white-space:pre;">instance_v2_create_instance.go</div>
<svg style="position:absolute;left:269px;top:1299px;" width="23" height="31" viewBox="-2 -1 23 31"><circle cx="1.8" cy="4.2" r="2.4" fill="#6ab3dd"/><circle cx="16.4" cy="4.2" r="2.4" fill="#6ab3dd"/><path d="M0.6,9 C0.6,2.5 4,0 9.1,0 C14.2,0 17.6,2.5 17.6,9 L18,21 C18,27.5 14,28.2 9.1,28.2 C4.2,28.2 0.2,27.5 0.2,21 Z" fill="#6ab3dd"/><circle cx="5.2" cy="8.6" r="3.1" fill="#fff"/><circle cx="12.7" cy="8.6" r="3.1" fill="#fff"/><circle cx="5.5" cy="8.6" r="1.35" fill="#000"/><circle cx="12.4" cy="8.6" r="1.35" fill="#000"/><ellipse cx="9" cy="11.8" rx="1.4" ry="1" fill="#1a1a1a"/><rect x="8.2" y="12.6" width="1.8" height="1.6" fill="#f2f2f2"/><circle cx="-0.3" cy="14.8" r="1.4" fill="#c9967a"/><circle cx="18.5" cy="14.8" r="1.4" fill="#c9967a"/><circle cx="2.5" cy="26.8" r="1.4" fill="#c9967a"/><circle cx="15.7" cy="26.8" r="1.4" fill="#c9967a"/></svg>
<div style="position:absolute;left:302px;top:1299px;font:normal 27.2px/32px 'Liberation Sans', sans-serif;color:#bbbbbb;white-space:pre;">instance_v2_create_instances.go</div>
<svg style="position:absolute;left:269px;top:1339px;" width="23" height="31" viewBox="-2 -1 23 31"><circle cx="1.8" cy="4.2" r="2.4" fill="#6ab3dd"/><circle cx="16.4" cy="4.2" r="2.4" fill="#6ab3dd"/><path d="M0.6,9 C0.6,2.5 4,0 9.1,0 C14.2,0 17.6,2.5 17.6,9 L18,21 C18,27.5 14,28.2 9.1,28.2 C4.2,28.2 0.2,27.5 0.2,21 Z" fill="#6ab3dd"/><circle cx="5.2" cy="8.6" r="3.1" fill="#fff"/><circle cx="12.7" cy="8.6" r="3.1" fill="#fff"/><circle cx="5.5" cy="8.6" r="1.35" fill="#000"/><circle cx="12.4" cy="8.6" r="1.35" fill="#000"/><ellipse cx="9" cy="11.8" rx="1.4" ry="1" fill="#1a1a1a"/><rect x="8.2" y="12.6" width="1.8" height="1.6" fill="#f2f2f2"/><circle cx="-0.3" cy="14.8" r="1.4" fill="#c9967a"/><circle cx="18.5" cy="14.8" r="1.4" fill="#c9967a"/><circle cx="2.5" cy="26.8" r="1.4" fill="#c9967a"/><circle cx="15.7" cy="26.8" r="1.4" fill="#c9967a"/></svg>
<div style="position:absolute;left:302px;top:1339px;font:normal 27.2px/32px 'Liberation Sans', sans-serif;color:#bbbbbb;white-space:pre;">instance_v2_describe_create_progress.go</div>
<svg style="position:absolute;left:269px;top:1379px;" width="23" height="31" viewBox="-2 -1 23 31"><circle cx="1.8" cy="4.2" r="2.4" fill="#6ab3dd"/><circle cx="16.4" cy="4.2" r="2.4" fill="#6ab3dd"/><path d="M0.6,9 C0.6,2.5 4,0 9.1,0 C14.2,0 17.6,2.5 17.6,9 L18,21 C18,27.5 14,28.2 9.1,28.2 C4.2,28.2 0.2,27.5 0.2,21 Z" fill="#6ab3dd"/><circle cx="5.2" cy="8.6" r="3.1" fill="#fff"/><circle cx="12.7" cy="8.6" r="3.1" fill="#fff"/><circle cx="5.5" cy="8.6" r="1.35" fill="#000"/><circle cx="12.4" cy="8.6" r="1.35" fill="#000"/><ellipse cx="9" cy="11.8" rx="1.4" ry="1" fill="#1a1a1a"/><rect x="8.2" y="12.6" width="1.8" height="1.6" fill="#f2f2f2"/><circle cx="-0.3" cy="14.8" r="1.4" fill="#c9967a"/><circle cx="18.5" cy="14.8" r="1.4" fill="#c9967a"/><circle cx="2.5" cy="26.8" r="1.4" fill="#c9967a"/><circle cx="15.7" cy="26.8" r="1.4" fill="#c9967a"/></svg>
<div style="position:absolute;left:302px;top:1379px;font:normal 27.2px/32px 'Liberation Sans', sans-serif;color:#bbbbbb;white-space:pre;">instance_v2_describe_instance.go</div>
<svg style="position:absolute;left:269px;top:1419px;" width="23" height="31" viewBox="-2 -1 23 31"><circle cx="1.8" cy="4.2" r="2.4" fill="#6ab3dd"/><circle cx="16.4" cy="4.2" r="2.4" fill="#6ab3dd"/><path d="M0.6,9 C0.6,2.5 4,0 9.1,0 C14.2,0 17.6,2.5 17.6,9 L18,21 C18,27.5 14,28.2 9.1,28.2 C4.2,28.2 0.2,27.5 0.2,21 Z" fill="#6ab3dd"/><circle cx="5.2" cy="8.6" r="3.1" fill="#fff"/><circle cx="12.7" cy="8.6" r="3.1" fill="#fff"/><circle cx="5.5" cy="8.6" r="1.35" fill="#000"/><circle cx="12.4" cy="8.6" r="1.35" fill="#000"/><ellipse cx="9" cy="11.8" rx="1.4" ry="1" fill="#1a1a1a"/><rect x="8.2" y="12.6" width="1.8" height="1.6" fill="#f2f2f2"/><circle cx="-0.3" cy="14.8" r="1.4" fill="#c9967a"/><circle cx="18.5" cy="14.8" r="1.4" fill="#c9967a"/><circle cx="2.5" cy="26.8" r="1.4" fill="#c9967a"/><circle cx="15.7" cy="26.8" r="1.4" fill="#c9967a"/></svg>
<div style="position:absolute;left:302px;top:1419px;font:normal 27.2px/32px 'Liberation Sans', sans-serif;color:#bbbbbb;white-space:pre;">instance_v2_describe_instance_health.go</div>
<svg style="position:absolute;left:269px;top:1459px;" width="23" height="31" viewBox="-2 -1 23 31"><circle cx="1.8" cy="4.2" r="2.4" fill="#6ab3dd"/><circle cx="16.4" cy="4.2" r="2.4" fill="#6ab3dd"/><path d="M0.6,9 C0.6,2.5 4,0 9.1,0 C14.2,0 17.6,2.5 17.6,9 L18,21 C18,27.5 14,28.2 9.1,28.2 C4.2,28.2 0.2,27.5 0.2,21 Z" fill="#6ab3dd"/><circle cx="5.2" cy="8.6" r="3.1" fill="#fff"/><circle cx="12.7" cy="8.6" r="3.1" fill="#fff"/><circle cx="5.5" cy="8.6" r="1.35" fill="#000"/><circle cx="12.4" cy="8.6" r="1.35" fill="#000"/><ellipse cx="9" cy="11.8" rx="1.4" ry="1" fill="#1a1a1a"/><rect x="8.2" y="12.6" width="1.8" height="1.6" fill="#f2f2f2"/><circle cx="-0.3" cy="14.8" r="1.4" fill="#c9967a"/><circle cx="18.5" cy="14.8" r="1.4" fill="#c9967a"/><circle cx="2.5" cy="26.8" r="1.4" fill="#c9967a"/><circle cx="15.7" cy="26.8" r="1.4" fill="#c9967a"/></svg>
<div style="position:absolute;left:302px;top:1459px;font:normal 27.2px/32px 'Liberation Sans', sans-serif;color:#bbbbbb;white-space:pre;">instance_v2_describe_instance_pods.go</div>
<svg style="position:absolute;left:269px;top:1499px;" width="23" height="31" viewBox="-2 -1 23 31"><circle cx="1.8" cy="4.2" r="2.4" fill="#6ab3dd"/><circle cx="16.4" cy="4.2" r="2.4" fill="#6ab3dd"/><path d="M0.6,9 C0.6,2.5 4,0 9.1,0 C14.2,0 17.6,2.5 17.6,9 L18,21 C18,27.5 14,28.2 9.1,28.2 C4.2,28.2 0.2,27.5 0.2,21 Z" fill="#6ab3dd"/><circle cx="5.2" cy="8.6" r="3.1" fill="#fff"/><circle cx="12.7" cy="8.6" r="3.1" fill="#fff"/><circle cx="5.5" cy="8.6" r="1.35" fill="#000"/><circle cx="12.4" cy="8.6" r="1.35" fill="#000"/><ellipse cx="9" cy="11.8" rx="1.4" ry="1" fill="#1a1a1a"/><rect x="8.2" y="12.6" width="1.8" height="1.6" fill="#f2f2f2"/><circle cx="-0.3" cy="14.8" r="1.4" fill="#c9967a"/><circle cx="18.5" cy="14.8" r="1.4" fill="#c9967a"/><circle cx="2.5" cy="26.8" r="1.4" fill="#c9967a"/><circle cx="15.7" cy="26.8" r="1.4" fill="#c9967a"/></svg>
<div style="position:absolute;left:302px;top:1499px;font:normal 27.2px/32px 'Liberation Sans', sans-serif;color:#bbbbbb;white-space:pre;">instance_v2_describe_instances.go</div>
<svg style="position:absolute;left:269px;top:1539px;" width="23" height="31" viewBox="-2 -1 23 31"><circle cx="1.8" cy="4.2" r="2.4" fill="#6ab3dd"/><circle cx="16.4" cy="4.2" r="2.4" fill="#6ab3dd"/><path d="M0.6,9 C0.6,2.5 4,0 9.1,0 C14.2,0 17.6,2.5 17.6,9 L18,21 C18,27.5 14,28.2 9.1,28.2 C4.2,28.2 0.2,27.5 0.2,21 Z" fill="#6ab3dd"/><circle cx="5.2" cy="8.6" r="3.1" fill="#fff"/><circle cx="12.7" cy="8.6" r="3.1" fill="#fff"/><circle cx="5.5" cy="8.6" r="1.35" fill="#000"/><circle cx="12.4" cy="8.6" r="1.35" fill="#000"/><ellipse cx="9" cy="11.8" rx="1.4" ry="1" fill="#1a1a1a"/><rect x="8.2" y="12.6" width="1.8" height="1.6" fill="#f2f2f2"/><circle cx="-0.3" cy="14.8" r="1.4" fill="#c9967a"/><circle cx="18.5" cy="14.8" r="1.4" fill="#c9967a"/><circle cx="2.5" cy="26.8" r="1.4" fill="#c9967a"/><circle cx="15.7" cy="26.8" r="1.4" fill="#c9967a"/></svg>
<div style="position:absolute;left:302px;top:1539px;font:normal 27.2px/32px 'Liberation Sans', sans-serif;color:#bbbbbb;white-space:pre;">instance_v2_isolate_instances.go</div>
<svg style="position:absolute;left:269px;top:1579px;" width="23" height="31" viewBox="-2 -1 23 31"><circle cx="1.8" cy="4.2" r="2.4" fill="#6ab3dd"/><circle cx="16.4" cy="4.2" r="2.4" fill="#6ab3dd"/><path d="M0.6,9 C0.6,2.5 4,0 9.1,0 C14.2,0 17.6,2.5 17.6,9 L18,21 C18,27.5 14,28.2 9.1,28.2 C4.2,28.2 0.2,27.5 0.2,21 Z" fill="#6ab3dd"/><circle cx="5.2" cy="8.6" r="3.1" fill="#fff"/><circle cx="12.7" cy="8.6" r="3.1" fill="#fff"/><circle cx="5.5" cy="8.6" r="1.35" fill="#000"/><circle cx="12.4" cy="8.6" r="1.35" fill="#000"/><ellipse cx="9" cy="11.8" rx="1.4" ry="1" fill="#1a1a1a"/><rect x="8.2" y="12.6" width="1.8" height="1.6" fill="#f2f2f2"/><circle cx="-0.3" cy="14.8" r="1.4" fill="#c9967a"/><circle cx="18.5" cy="14.8" r="1.4" fill="#c9967a"/><circle cx="2.5" cy="26.8" r="1.4" fill="#c9967a"/><circle cx="15.7" cy="26.8" r="1.4" fill="#c9967a"/></svg>
<div style="position:absolute;left:302px;top:1579px;font:normal 27.2px/32px 'Liberation Sans', sans-serif;color:#bbbbbb;white-space:pre;">instance_v2_modify_instance.go</div>
<svg style="position:absolute;left:269px;top:1619px;" width="23" height="31" viewBox="-2 -1 23 31"><circle cx="1.8" cy="4.2" r="2.4" fill="#6ab3dd"/><circle cx="16.4" cy="4.2" r="2.4" fill="#6ab3dd"/><path d="M0.6,9 C0.6,2.5 4,0 9.1,0 C14.2,0 17.6,2.5 17.6,9 L18,21 C18,27.5 14,28.2 9.1,28.2 C4.2,28.2 0.2,27.5 0.2,21 Z" fill="#6ab3dd"/><circle cx="5.2" cy="8.6" r="3.1" fill="#fff"/><circle cx="12.7" cy="8.6" r="3.1" fill="#fff"/><circle cx="5.5" cy="8.6" r="1.35" fill="#000"/><circle cx="12.4" cy="8.6" r="1.35" fill="#000"/><ellipse cx="9" cy="11.8" rx="1.4" ry="1" fill="#1a1a1a"/><rect x="8.2" y="12.6" width="1.8" height="1.6" fill="#f2f2f2"/><circle cx="-0.3" cy="14.8" r="1.4" fill="#c9967a"/><circle cx="18.5" cy="14.8" r="1.4" fill="#c9967a"/><circle cx="2.5" cy="26.8" r="1.4" fill="#c9967a"/><circle cx="15.7" cy="26.8" r="1.4" fill="#c9967a"/></svg>
<div style="position:absolute;left:302px;top:1619px;font:normal 27.2px/32px 'Liberation Sans', sans-serif;color:#bbbbbb;white-space:pre;">instance_v2_offline_instances.go</div>
<svg style="position:absolute;left:269px;top:1659px;" width="23" height="31" viewBox="-2 -1 23 31"><circle cx="1.8" cy="4.2" r="2.4" fill="#6ab3dd"/><circle cx="16.4" cy="4.2" r="2.4" fill="#6ab3dd"/><path d="M0.6,9 C0.6,2.5 4,0 9.1,0 C14.2,0 17.6,2.5 17.6,9 L18,21 C18,27.5 14,28.2 9.1,28.2 C4.2,28.2 0.2,27.5 0.2,21 Z" fill="#6ab3dd"/><circle cx="5.2" cy="8.6" r="3.1" fill="#fff"/><circle cx="12.7" cy="8.6" r="3.1" fill="#fff"/><circle cx="5.5" cy="8.6" r="1.35" fill="#000"/><circle cx="12.4" cy="8.6" r="1.35" fill="#000"/><ellipse cx="9" cy="11.8" rx="1.4" ry="1" fill="#1a1a1a"/><rect x="8.2" y="12.6" width="1.8" height="1.6" fill="#f2f2f2"/><circle cx="-0.3" cy="14.8" r="1.4" fill="#c9967a"/><circle cx="18.5" cy="14.8" r="1.4" fill="#c9967a"/><circle cx="2.5" cy="26.8" r="1.4" fill="#c9967a"/><circle cx="15.7" cy="26.8" r="1.4" fill="#c9967a"/></svg>
<div style="position:absolute;left:302px;top:1659px;font:normal 27.2px/32px 'Liberation Sans', sans-serif;color:#bbbbbb;white-space:pre;">instance_v2_recover_instances.go</div>
<svg style="position:absolute;left:196px;top:1704px;" width="12" height="20" viewBox="0 0 12 20"><polyline points="2,2 10,10 2,18" fill="none" stroke="#9a9da0" stroke-width="2.2"/></svg>
<svg style="position:absolute;left:230px;top:1702px;" width="28" height="22" viewBox="0 0 28 22"><path d="M0,0 H13 L16,4 H28 V22 H0 Z" fill="#7f8b94"/></svg>
<div style="position:absolute;left:266px;top:1699px;font:normal 27.2px/32px 'Liberation Sans', sans-serif;color:#bbbbbb;white-space:pre;">monitor</div>
<svg style="position:absolute;left:196px;top:1744px;" width="12" height="20" viewBox="0 0 12 20"><polyline points="2,2 10,10 2,18" fill="none" stroke="#9a9da0" stroke-width="2.2"/></svg>
<svg style="position:absolute;left:230px;top:1742px;" width="28" height="22" viewBox="0 0 28 22"><path d="M0,0 H13 L16,4 H28 V22 H0 Z" fill="#7f8b94"/></svg>
<div style="position:absolute;left:266px;top:1739px;font:normal 27.2px/32px 'Liberation Sans', sans-serif;color:#bbbbbb;white-space:pre;">monitor_panel</div>
<svg style="position:absolute;left:196px;top:1784px;" width="12" height="20" viewBox="0 0 12 20"><polyline points="2,2 10,10 2,18" fill="none" stroke="#9a9da0" stroke-width="2.2"/></svg>
<svg style="position:absolute;left:230px;top:1782px;" width="28" height="22" viewBox="0 0 28 22"><path d="M0,0 H13 L16,4 H28 V22 H0 Z" fill="#7f8b94"/></svg>
<div style="position:absolute;left:266px;top:1779px;font:normal 27.2px/32px 'Liberation Sans', sans-serif;color:#bbbbbb;white-space:pre;">network</div>
<svg style="position:absolute;left:196px;top:1824px;" width="12" height="20" viewBox="0 0 12 20"><polyline points="2,2 10,10 2,18" fill="none" stroke="#9a9da0" stroke-width="2.2"/></svg>
<svg style="position:absolute;left:230px;top:1822px;" width="28" height="22" viewBox="0 0 28 22"><path d="M0,0 H13 L16,4 H28 V22 H0 Z" fill="#7f8b94"/></svg>
<div style="position:absolute;left:266px;top:1819px;font:normal 27.2px/32px 'Liberation Sans', sans-serif;color:#bbbbbb;white-space:pre;">node</div>
</div>
<svg style="position:absolute;left:68px;top:130px;" width="29" height="27" viewBox="0 0 29 27"><rect x="0" y="0" width="29" height="27" fill="#7f8a94"/><rect x="4" y="8" width="21" height="15" fill="#3a7fa6"/></svg>
<div style="position:absolute;left:106px;top:127.5px;font:normal 26.5px/30px 'Liberation Sans', sans-serif;color:#bbbbbb;white-space:pre;">Project</div>
<svg style="position:absolute;left:223px;top:139px;" width="18" height="10" viewBox="0 0 18 10"><polygon points="0,0 18,0 9,10" fill="#a0a3a6"/></svg>
<svg style="position:absolute;left:751px;top:127px;" width="30" height="30" viewBox="0 0 30 30"><circle cx="15" cy="15" r="12.6" fill="none" stroke="#afb1b3" stroke-width="2.6"/><rect x="13.7" y="2" width="2.6" height="9" fill="#afb1b3"/><rect x="13.7" y="19" width="2.6" height="9" fill="#afb1b3"/><rect x="2" y="13.7" width="9" height="2.6" fill="#afb1b3"/><rect x="19" y="13.7" width="9" height="2.6" fill="#afb1b3"/></svg>
<svg style="position:absolute;left:805px;top:127px;" width="26" height="30" viewBox="0 0 26 30"><rect x="0" y="0" width="25" height="4" fill="#afb1b3"/><rect x="0" y="25" width="25" height="4" fill="#afb1b3"/><polygon points="6,11 12.5,4.5 19,11" fill="#afb1b3"/><polygon points="6,16 12.5,22.5 19,16" fill="#afb1b3"/></svg>
<svg style="position:absolute;left:857px;top:127px;" width="26" height="30" viewBox="0 0 26 30"><rect x="0" y="12.5" width="25" height="4" fill="#afb1b3"/><polygon points="5,0 20,0 12.5,7" fill="#afb1b3"/><polygon points="5,29 20,29 12.5,22" fill="#afb1b3"/></svg>
<div style="position:absolute;left:902px;top:122px;width:2px;height:40px;background:#4a4843;"></div>
<svg style="position:absolute;left:922px;top:128px;" width="26" height="26" viewBox="0 0 26 26"><g transform="translate(13,13)"><rect x="-3.2" y="-13" width="6.4" height="7" fill="#afb1b3" transform="rotate(0)"/><rect x="-3.2" y="-13" width="6.4" height="7" fill="#afb1b3" transform="rotate(60)"/><rect x="-3.2" y="-13" width="6.4" height="7" fill="#afb1b3" transform="rotate(120)"/><rect x="-3.2" y="-13" width="6.4" height="7" fill="#afb1b3" transform="rotate(180)"/><rect x="-3.2" y="-13" width="6.4" height="7" fill="#afb1b3" transform="rotate(240)"/><rect x="-3.2" y="-13" width="6.4" height="7" fill="#afb1b3" transform="rotate(300)"/><circle r="9.5" fill="#afb1b3"/><circle r="4" fill="#313842"/></g></svg>
<div style="position:absolute;left:976px;top:140px;width:24px;height:4px;background:#afb1b3;"></div>
<svg style="position:absolute;left:1037px;top:127px;" width="23" height="31" viewBox="-2 -1 23 31"><circle cx="1.8" cy="4.2" r="2.4" fill="#6ab3dd"/><circle cx="16.4" cy="4.2" r="2.4" fill="#6ab3dd"/><path d="M0.6,9 C0.6,2.5 4,0 9.1,0 C14.2,0 17.6,2.5 17.6,9 L18,21 C18,27.5 14,28.2 9.1,28.2 C4.2,28.2 0.2,27.5 0.2,21 Z" fill="#6ab3dd"/><circle cx="5.2" cy="8.6" r="3.1" fill="#fff"/><circle cx="12.7" cy="8.6" r="3.1" fill="#fff"/><circle cx="5.5" cy="8.6" r="1.35" fill="#000"/><circle cx="12.4" cy="8.6" r="1.35" fill="#000"/><ellipse cx="9" cy="11.8" rx="1.4" ry="1" fill="#1a1a1a"/><rect x="8.2" y="12.6" width="1.8" height="1.6" fill="#f2f2f2"/><circle cx="-0.3" cy="14.8" r="1.4" fill="#c9967a"/><circle cx="18.5" cy="14.8" r="1.4" fill="#c9967a"/><circle cx="2.5" cy="26.8" r="1.4" fill="#c9967a"/><circle cx="15.7" cy="26.8" r="1.4" fill="#c9967a"/></svg>
<div style="position:absolute;left:1072px;top:127px;font:normal 23.6px/30px 'Liberation Sans', sans-serif;color:#bbbbbb;white-space:pre;">api/.../instance.go</div>
<svg style="position:absolute;left:1273px;top:135px;" width="15" height="15" viewBox="0 0 15 15"><path d="M1,1 L14,14 M14,1 L1,14" stroke="#5d6266" stroke-width="1.8"/></svg>
<div style="position:absolute;left:1302px;top:116px;width:278px;height:52px;background:#393c40;"></div>
<div style="position:absolute;left:1302px;top:164px;width:278px;height:6px;background:#6e757d;"></div>
<svg style="position:absolute;left:1323px;top:127px;" width="23" height="31" viewBox="-2 -1 23 31"><circle cx="1.8" cy="4.2" r="2.4" fill="#6ab3dd"/><circle cx="16.4" cy="4.2" r="2.4" fill="#6ab3dd"/><path d="M0.6,9 C0.6,2.5 4,0 9.1,0 C14.2,0 17.6,2.5 17.6,9 L18,21 C18,27.5 14,28.2 9.1,28.2 C4.2,28.2 0.2,27.5 0.2,21 Z" fill="#6ab3dd"/><circle cx="5.2" cy="8.6" r="3.1" fill="#fff"/><circle cx="12.7" cy="8.6" r="3.1" fill="#fff"/><circle cx="5.5" cy="8.6" r="1.35" fill="#000"/><circle cx="12.4" cy="8.6" r="1.35" fill="#000"/><ellipse cx="9" cy="11.8" rx="1.4" ry="1" fill="#1a1a1a"/><rect x="8.2" y="12.6" width="1.8" height="1.6" fill="#f2f2f2"/><circle cx="-0.3" cy="14.8" r="1.4" fill="#c9967a"/><circle cx="18.5" cy="14.8" r="1.4" fill="#c9967a"/><circle cx="2.5" cy="26.8" r="1.4" fill="#c9967a"/><circle cx="15.7" cy="26.8" r="1.4" fill="#c9967a"/></svg>
<div style="position:absolute;left:1358px;top:127px;font:normal 23.6px/30px 'Liberation Sans', sans-serif;color:#bbbbbb;white-space:pre;">instance_new.go</div>
<svg style="position:absolute;left:1549px;top:135px;" width="15" height="15" viewBox="0 0 15 15"><path d="M1,1 L14,14 M14,1 L1,14" stroke="#5d6266" stroke-width="1.8"/></svg>
<svg style="position:absolute;left:1599px;top:127px;" width="23" height="31" viewBox="-2 -1 23 31"><circle cx="1.8" cy="4.2" r="2.4" fill="#6ab3dd"/><circle cx="16.4" cy="4.2" r="2.4" fill="#6ab3dd"/><path d="M0.6,9 C0.6,2.5 4,0 9.1,0 C14.2,0 17.6,2.5 17.6,9 L18,21 C18,27.5 14,28.2 9.1,28.2 C4.2,28.2 0.2,27.5 0.2,21 Z" fill="#6ab3dd"/><circle cx="5.2" cy="8.6" r="3.1" fill="#fff"/><circle cx="12.7" cy="8.6" r="3.1" fill="#fff"/><circle cx="5.5" cy="8.6" r="1.35" fill="#000"/><circle cx="12.4" cy="8.6" r="1.35" fill="#000"/><ellipse cx="9" cy="11.8" rx="1.4" ry="1" fill="#1a1a1a"/><rect x="8.2" y="12.6" width="1.8" height="1.6" fill="#f2f2f2"/><circle cx="-0.3" cy="14.8" r="1.4" fill="#c9967a"/><circle cx="18.5" cy="14.8" r="1.4" fill="#c9967a"/><circle cx="2.5" cy="26.8" r="1.4" fill="#c9967a"/><circle cx="15.7" cy="26.8" r="1.4" fill="#c9967a"/></svg>
<div style="position:absolute;left:1634px;top:127px;font:normal 23.6px/30px 'Liberation Sans', sans-serif;color:#bbbbbb;white-space:pre;">controller/.../instance.go</div>
<svg style="position:absolute;left:1903px;top:135px;" width="15" height="15" viewBox="0 0 15 15"><path d="M1,1 L14,14 M14,1 L1,14" stroke="#5d6266" stroke-width="1.8"/></svg>
<div style="position:absolute;left:3770.5px;top:129.5px;width:7px;height:7px;border-radius:50%;background:#afb1b3"></div>
<div style="position:absolute;left:3770.5px;top:139.5px;width:7px;height:7px;border-radius:50%;background:#afb1b3"></div>
<div style="position:absolute;left:3770.5px;top:149.5px;width:7px;height:7px;border-radius:50%;background:#afb1b3"></div>
<div style="position:absolute;left:1014px;top:168px;width:132px;height:53px;background:#2c2c2d;"></div>
<div style="position:absolute;left:1146px;top:168px;width:2652px;height:53px;background:#2e2e2e;"></div>
<div style="position:absolute;left:1302px;top:164px;width:278px;height:6px;background:#6e757d;"></div>
<div style="position:absolute;left:1145px;top:168px;width:2px;height:1815px;background:#4a4a4a;"></div>
<div style="position:absolute;left:3319px;top:170px;width:2px;height:1813px;background:#3b3b3b;"></div>
<div style="position:absolute;left:999px;top:174px;width:60px;text-align:right;font:30px/52px 'Liberation Mono', monospace;color:#a4a3a3;white-space:pre">1</div>
<div style="position:absolute;left:1160px;top:174px;font:30px/52px 'Liberation Mono', monospace;white-space:pre"><span style="color:#808080">// =================================================================================</span></div>
<div style="position:absolute;left:999px;top:226px;width:60px;text-align:right;font:30px/52px 'Liberation Mono', monospace;color:#606366;white-space:pre">2</div>
<div style="position:absolute;left:1160px;top:226px;font:30px/52px 'Liberation Mono', monospace;white-space:pre"><span style="color:#808080">// Code generated and maintained by GoFrame CLI tool. DO NOT EDIT.</span></div>
<div style="position:absolute;left:999px;top:278px;width:60px;text-align:right;font:30px/52px 'Liberation Mono', monospace;color:#606366;white-space:pre">3</div>
<div style="position:absolute;left:1160px;top:278px;font:30px/52px 'Liberation Mono', monospace;white-space:pre"><span style="color:#808080">// =================================================================================</span></div>
<div style="position:absolute;left:999px;top:330px;width:60px;text-align:right;font:30px/52px 'Liberation Mono', monospace;color:#606366;white-space:pre">4</div>
<div style="position:absolute;left:999px;top:382px;width:60px;text-align:right;font:30px/52px 'Liberation Mono', monospace;color:#606366;white-space:pre">5</div>
<div style="position:absolute;left:1160px;top:382px;font:30px/52px 'Liberation Mono', monospace;white-space:pre"><span style="color:#cc7832">package </span><span style="color:#afbf7e">instance</span></div>
<div style="position:absolute;left:999px;top:434px;width:60px;text-align:right;font:30px/52px 'Liberation Mono', monospace;color:#606366;white-space:pre">6</div>
<div style="position:absolute;left:999px;top:486px;width:60px;text-align:right;font:30px/52px 'Liberation Mono', monospace;color:#606366;white-space:pre">7</div>
<div style="position:absolute;left:1160px;top:486px;font:30px/52px 'Liberation Mono', monospace;white-space:pre"><span style="color:#cc7832">import </span><span style="color:#6a8759">"git.woa.com/khaos/eros/app/khaos-shark/api/instance"</span></div>
<div style="position:absolute;left:999px;top:538px;width:60px;text-align:right;font:30px/52px 'Liberation Mono', monospace;color:#606366;white-space:pre">8</div>
<div style="position:absolute;left:999px;top:590px;width:60px;text-align:right;font:30px/52px 'Liberation Mono', monospace;color:#606366;white-space:pre">9</div>
<div style="position:absolute;left:1160px;top:590px;font:30px/52px 'Liberation Mono', monospace;white-space:pre"><span style="color:#cc7832">type </span><span style="color:#a9b7c6">ControllerV1 </span><span style="color:#cc7832">struct</span><span style="color:#a9b7c6">{}</span></div>
<div style="position:absolute;left:999px;top:642px;width:60px;text-align:right;font:30px/52px 'Liberation Mono', monospace;color:#606366;white-space:pre">10</div>
<div style="position:absolute;left:999px;top:694px;width:60px;text-align:right;font:30px/52px 'Liberation Mono', monospace;color:#606366;white-space:pre">11</div>
<div style="position:absolute;left:1160px;top:694px;font:30px/52px 'Liberation Mono', monospace;white-space:pre"><span style="color:#cc7832">func </span><span style="color:#ffc66d">NewV1</span><span style="color:#a9b7c6">() </span><span style="color:#afbf7e">instance</span><span style="color:#a9b7c6">.</span><span style="color:#6fafbd">IInstanceV1</span><span style="color:#a9b7c6"> {</span></div>
<div style="position:absolute;left:999px;top:746px;width:60px;text-align:right;font:30px/52px 'Liberation Mono', monospace;color:#606366;white-space:pre">12</div>
<div style="position:absolute;left:1160px;top:746px;font:30px/52px 'Liberation Mono', monospace;white-space:pre"><span style="color:#a9b7c6">    </span><span style="color:#cc7832">return </span><span style="color:#a9b7c6">&amp;</span><span style="color:#6fafbd">ControllerV1</span><span style="color:#a9b7c6">{}</span></div>
<div style="position:absolute;left:999px;top:798px;width:60px;text-align:right;font:30px/52px 'Liberation Mono', monospace;color:#606366;white-space:pre">13</div>
<div style="position:absolute;left:1160px;top:798px;font:30px/52px 'Liberation Mono', monospace;white-space:pre"><span style="color:#a9b7c6">}</span></div>
<div style="position:absolute;left:999px;top:850px;width:60px;text-align:right;font:30px/52px 'Liberation Mono', monospace;color:#606366;white-space:pre">14</div>
<div style="position:absolute;left:1160px;top:850px;font:30px/52px 'Liberation Mono', monospace;white-space:pre"><span style="color:#cc7832">type </span><span style="color:#a9b7c6">ControllerV2 </span><span style="color:#cc7832">struct</span><span style="color:#a9b7c6">{}</span></div>
<div style="position:absolute;left:999px;top:902px;width:60px;text-align:right;font:30px/52px 'Liberation Mono', monospace;color:#606366;white-space:pre">15</div>
<div style="position:absolute;left:999px;top:954px;width:60px;text-align:right;font:30px/52px 'Liberation Mono', monospace;color:#606366;white-space:pre">16</div>
<div style="position:absolute;left:1160px;top:954px;font:30px/52px 'Liberation Mono', monospace;white-space:pre"><span style="color:#cc7832">func </span><span style="color:#ffc66d">NewV2</span><span style="color:#a9b7c6">() </span><span style="color:#afbf7e">instance</span><span style="color:#a9b7c6">.</span><span style="color:#6fafbd">IInstanceV2</span><span style="color:#a9b7c6"> {</span></div>
<div style="position:absolute;left:999px;top:1006px;width:60px;text-align:right;font:30px/52px 'Liberation Mono', monospace;color:#606366;white-space:pre">17</div>
<div style="position:absolute;left:1160px;top:1006px;font:30px/52px 'Liberation Mono', monospace;white-space:pre"><span style="color:#a9b7c6">    </span><span style="color:#cc7832">return </span><span style="color:#a9b7c6">&amp;</span><span style="color:#6fafbd">ControllerV2</span><span style="color:#a9b7c6">{}</span></div>
<div style="position:absolute;left:999px;top:1058px;width:60px;text-align:right;font:30px/52px 'Liberation Mono', monospace;color:#606366;white-space:pre">18</div>
<div style="position:absolute;left:1160px;top:1058px;font:30px/52px 'Liberation Mono', monospace;white-space:pre"><span style="color:#a9b7c6">}</span></div>
<div style="position:absolute;left:999px;top:1110px;width:60px;text-align:right;font:30px/52px 'Liberation Mono', monospace;color:#606366;white-space:pre">19</div>
<div style="position:absolute;left:999px;top:1162px;width:60px;text-align:right;font:30px/52px 'Liberation Mono', monospace;color:#606366;white-space:pre">20</div>
<svg style="position:absolute;left:1135px;top:187px;" width="23" height="28" viewBox="0 0 23 28"><path d="M1,1 H22 V16.5 L11.5,26.5 L1,16.5 Z" fill="#2b2b2b" stroke="#595959" stroke-width="1.7"/><rect x="5.5" y="10.3" width="12" height="2" fill="#5f5f5f"/></svg>
<svg style="position:absolute;left:1135px;top:285px;" width="23" height="28" viewBox="0 0 23 28"><path d="M1,27 H22 V11.5 L11.5,1.5 L1,11.5 Z" fill="#2b2b2b" stroke="#595959" stroke-width="1.7"/><rect x="5.5" y="15.7" width="12" height="2" fill="#5f5f5f"/></svg>
<svg style="position:absolute;left:1135px;top:707px;" width="23" height="28" viewBox="0 0 23 28"><path d="M1,1 H22 V16.5 L11.5,26.5 L1,16.5 Z" fill="#2b2b2b" stroke="#595959" stroke-width="1.7"/><rect x="5.5" y="10.3" width="12" height="2" fill="#5f5f5f"/></svg>
<svg style="position:absolute;left:1135px;top:967px;" width="23" height="28" viewBox="0 0 23 28"><path d="M1,1 H22 V16.5 L11.5,26.5 L1,16.5 Z" fill="#2b2b2b" stroke="#595959" stroke-width="1.7"/><rect x="5.5" y="10.3" width="12" height="2" fill="#5f5f5f"/></svg>
<svg style="position:absolute;left:1135px;top:805px;" width="23" height="28" viewBox="0 0 23 28"><path d="M1,27 H22 V11.5 L11.5,1.5 L1,11.5 Z" fill="#2b2b2b" stroke="#595959" stroke-width="1.7"/><rect x="5.5" y="15.7" width="12" height="2" fill="#5f5f5f"/></svg>
<svg style="position:absolute;left:1135px;top:1065px;" width="23" height="28" viewBox="0 0 23 28"><path d="M1,27 H22 V11.5 L11.5,1.5 L1,11.5 Z" fill="#2b2b2b" stroke="#595959" stroke-width="1.7"/><rect x="5.5" y="15.7" width="12" height="2" fill="#5f5f5f"/></svg>
<svg style="position:absolute;left:1177px;top:223px;" width="22" height="30" viewBox="0 0 22 30"><path d="M11,1 C4.5,1 1,5.5 1,10.5 C1,14.5 4,17 5.5,19 V21 H16.5 V19 C18,17 21,14.5 21,10.5 C21,5.5 17.5,1 11,1 Z" fill="#f0a33c"/><rect x="5" y="23" width="12" height="2.2" fill="#d8d8d8"/><rect x="6" y="27" width="10" height="2.2" fill="#d8d8d8"/></svg>
<svg style="position:absolute;left:1079px;top:594px;" width="36" height="34" viewBox="0 0 36 34"><circle cx="11.8" cy="16" r="10.9" fill="#4e8a3e"/><path d="M8.5,10.5 H15 M11.8,10.5 V21.5 M8.5,21.5 H15" stroke="#1e2a1a" stroke-width="1.8"/><rect x="25" y="7" width="3.2" height="26" fill="#d04a4a"/><polygon points="20,9 33.5,9 26.6,0" fill="#d04a4a"/></svg>
<svg style="position:absolute;left:1079px;top:854px;" width="36" height="34" viewBox="0 0 36 34"><circle cx="11.8" cy="16" r="10.9" fill="#4e8a3e"/><path d="M8.5,10.5 H15 M11.8,10.5 V21.5 M8.5,21.5 H15" stroke="#1e2a1a" stroke-width="1.8"/><rect x="25" y="7" width="3.2" height="26" fill="#d04a4a"/><polygon points="20,9 33.5,9 26.6,0" fill="#d04a4a"/></svg>
<div style="position:absolute;left:3751px;top:174px;width:43px;height:44px;background:#232323;border-radius:6px"></div>
<svg style="position:absolute;left:3758px;top:186px;" width="28" height="23" viewBox="0 0 28 23"><path d="M1.5,11 L4.8,7.8 L10.3,13 L23.5,1.5 L26.5,4.8 L10.3,20.5 Z" fill="none" stroke="#4e9f57" stroke-width="1.8"/></svg>
<svg style="position:absolute;left:2320px;top:72px;" width="32" height="27" viewBox="0 0 32 27"><path d="M20,2 C24,1 27,4 26.5,9 C26.2,12 25,14 23.5,15.5 C27,16.5 30,18 30,20 V21 H24 C22,18.5 20,17 17.5,16.5 C19.5,13 20.5,9 18.5,3.5 Z" fill="#afb1b3"/><path d="M12.5,1 C17.5,1 19.5,5 19,10 C18.7,13 17.3,15 15.8,16.5 C22,17.5 25,20.5 25,25.5 V26 H1 V25.5 C1,20.5 4,17.5 10.2,16.5 C8.7,15 7.3,13 7,10 C6.5,5 8,1 12.5,1 Z" fill="#afb1b3" stroke="#353638" stroke-width="1.6"/></svg>
<svg style="position:absolute;left:2356px;top:83px;" width="15" height="9" viewBox="0 0 15 9"><polygon points="0,0 15,0 7.5,9" fill="#afb1b3"/></svg>
<div style="position:absolute;left:2382px;top:66px;width:2px;height:40px;background:#4a4b4d;"></div>
<div style="position:absolute;left:2402px;top:64px;width:628px;height:40px;border:2px solid #5b5d5f;border-radius:5px"></div>
<svg style="position:absolute;left:2425px;top:71px;" width="30" height="31" viewBox="-2 -1 30 31"><circle cx="1.8" cy="4.2" r="2.4" fill="#405a6a"/><circle cx="16.4" cy="4.2" r="2.4" fill="#405a6a"/><path d="M0.6,9 C0.6,2.5 4,0 9.1,0 C14.2,0 17.6,2.5 17.6,9 L18,21 C18,27.5 14,28.2 9.1,28.2 C4.2,28.2 0.2,27.5 0.2,21 Z" fill="#405a6a"/><circle cx="5.2" cy="8.6" r="3.1" fill="#8c969c"/><circle cx="12.7" cy="8.6" r="3.1" fill="#8c969c"/><circle cx="5.5" cy="8.6" r="1.35" fill="#1d1d1d"/><circle cx="12.4" cy="8.6" r="1.35" fill="#1d1d1d"/><ellipse cx="9" cy="11.8" rx="1.4" ry="1" fill="#1a1a1a"/><rect x="8.2" y="12.6" width="1.8" height="1.6" fill="#8c969c"/><circle cx="-0.3" cy="14.8" r="1.4" fill="#6e5a4f"/><circle cx="18.5" cy="14.8" r="1.4" fill="#6e5a4f"/><circle cx="2.5" cy="26.8" r="1.4" fill="#6e5a4f"/><circle cx="15.7" cy="26.8" r="1.4" fill="#6e5a4f"/><polygon points="16,14.5 26.5,21.5 16,28.5" fill="#3f7d46" opacity="0.9"/></svg>
<div style="position:absolute;left:2460px;top:71px;font:normal 23.6px/30px 'Liberation Sans', sans-serif;color:#bbbbbb;white-space:pre;">go build git.woa.com/khaos/eros/app/khaos-shark</div>
<svg style="position:absolute;left:2999px;top:81px;" width="17" height="10" viewBox="0 0 17 10"><polygon points="0,0 17,0 8.5,10" fill="#afb1b3"/></svg>
<svg style="position:absolute;left:3062px;top:74px;" width="20" height="24" viewBox="0 0 20 24"><polygon points="0,0 20,12 0,24" fill="#499c54"/></svg>
<svg style="position:absolute;left:3109px;top:72px;" width="25" height="29" viewBox="0 0 25 29"><path d="M6,0.8 L12.5,6.5 L19,0.8" fill="none" stroke="#499c54" stroke-width="3"/><path d="M3.5,10 C3.5,6 7,4.5 12.5,4.5 C18,4.5 21.5,6 21.5,10 V22 C21.5,26 17,28.2 12.5,28.2 C8,28.2 3.5,26 3.5,22 Z" fill="#499c54"/><rect x="0" y="8" width="25" height="4" fill="#499c54"/><rect x="0" y="20.5" width="25" height="4" fill="#499c54"/><rect x="8.5" y="12.5" width="8" height="2.8" fill="#353638"/><rect x="8.5" y="18" width="8" height="2.8" fill="#353638"/></svg>
<svg style="position:absolute;left:3159px;top:73px;" width="32" height="30" viewBox="0 0 32 30"><path d="M1,3.5 L11,1 L21,3.5 V16 C21,21 17,24 11,26 C5,24 1,21 1,16 Z" fill="#4b4b4c"/><rect x="11.5" y="4.5" width="3" height="20" fill="#353638"/><polygon points="16.5,12 31,20.5 16.5,29" fill="#4b4b4c"/></svg>
<svg style="position:absolute;left:3213px;top:72px;" width="32" height="31" viewBox="0 0 32 31"><path d="M14,24 A11.5,11.5 0 1 1 24.2,10" fill="none" stroke="#4b4b4c" stroke-width="2.6"/><path d="M12.5,6.5 V13 L9,17.5" stroke="#4b4b4c" stroke-width="2.2" fill="none"/><polygon points="16.5,13 30.5,21.5 16.5,30" fill="#4b4b4c"/></svg>
<svg style="position:absolute;left:3256px;top:84px;" width="15" height="8.5" viewBox="0 0 15 8.5"><polygon points="0,0 15,0 7.5,9" fill="#afb1b3"/></svg>
<div style="position:absolute;left:3298px;top:76px;width:20px;height:20px;background:#4b4c4e;"></div>
<div style="position:absolute;left:3340px;top:66px;width:2px;height:40px;background:#4a4b4d;"></div>
<div style="position:absolute;left:3360px;top:72px;font:normal 23.6px/30px 'Liberation Sans', sans-serif;color:#bbbbbb;white-space:pre;">Git:</div>
<svg style="position:absolute;left:3420px;top:74px;" width="25" height="25" viewBox="0 0 25 25"><path d="M23,2 L5,20" stroke="#3592c4" stroke-width="3.2"/><polygon points="1,24 1,10 15,24" fill="#3592c4"/></svg>
<svg style="position:absolute;left:3471px;top:74px;" width="29" height="23" viewBox="0 0 29 23"><path d="M2,12 L10,20 L27,3" fill="none" stroke="#499c54" stroke-width="3.6"/></svg>
<svg style="position:absolute;left:3523px;top:74px;" width="25" height="25" viewBox="0 0 25 25"><path d="M2,23 L20,5" stroke="#499c54" stroke-width="3.2"/><polygon points="24,1 24,15 10,1" fill="#499c54"/></svg>
<svg style="position:absolute;left:3573px;top:72px;" width="29" height="29" viewBox="0 0 29 29"><circle cx="14.5" cy="14.5" r="12.5" fill="none" stroke="#afb1b3" stroke-width="3"/><path d="M14.5,7 V15 L19.5,19" stroke="#afb1b3" stroke-width="3" fill="none"/></svg>
<svg style="position:absolute;left:3628px;top:74px;" width="26" height="26" viewBox="0 0 26 26"><path d="M5,9 H15 C20,9 23,12 23,16 C23,20 20,23 15,23 H10" fill="none" stroke="#4b4c4e" stroke-width="3"/><polygon points="0,9 8,2 8,16" fill="#4b4c4e"/></svg>
<div style="position:absolute;left:3672px;top:66px;width:2px;height:40px;background:#4a4b4d;"></div>
<svg style="position:absolute;left:3692px;top:72px;" width="29" height="29" viewBox="0 0 29 29"><circle cx="11.5" cy="11.5" r="9" fill="none" stroke="#afb1b3" stroke-width="3.2"/><path d="M18,18 L27,27" stroke="#afb1b3" stroke-width="3.6"/></svg>
<svg style="position:absolute;left:3742px;top:70px;" width="33" height="33" viewBox="0 0 33 33"><circle cx="16.5" cy="16.5" r="16" fill="#3592c4"/><path d="M16.5,26 V10" stroke="#fff" stroke-width="3"/><polygon points="9,15 16.5,7 24,15" fill="#fff"/></svg>
<svg style="position:absolute;left:3795px;top:71px;" width="30" height="30" viewBox="0 0 30 30"><defs><linearGradient id="tbg" x1="0.1" y1="0" x2="0.5" y2="1"><stop offset="0" stop-color="#f3ea3f"/><stop offset="0.5" stop-color="#4fd98a"/><stop offset="1" stop-color="#13b6e8"/></linearGradient><linearGradient id="tbb" x1="0" y1="0" x2="1" y2="1"><stop offset="0" stop-color="#2fb8c9"/><stop offset="1" stop-color="#1d4fc4"/></linearGradient></defs><path d="M2,1 C12,1 22,6 29,14 C23,22 14,27 6,29 C2,22 0,12 2,1 Z" fill="url(#tbg)"/><path d="M18,14 L29,14 C23,22 14,27 6,29 Z" fill="url(#tbb)"/></svg>
<div style="position:absolute;left:8px;top:207px;transform-origin:0 0;transform:rotate(-90deg);font:23.2px/27.2px 'Liberation Sans', sans-serif;color:#dcdcdc;white-space:pre">Project</div>
<svg style="position:absolute;left:10px;top:220px;" width="23" height="18" viewBox="0 0 23 18"><path d="M0,0 H9 L12,4 H23 V18 H0 Z" fill="#afb1b3"/></svg>
<div style="position:absolute;left:7px;top:364px;transform-origin:0 0;transform:rotate(-90deg);font:23.2px/27.2px 'Liberation Sans', sans-serif;color:#afafaf;white-space:pre">Commit</div>
<svg style="position:absolute;left:8px;top:375px;" width="26" height="17" viewBox="0 0 26 17"><circle cx="13" cy="8.5" r="6" fill="none" stroke="#afb1b3" stroke-width="3.4"/><rect x="0" y="7" width="5" height="3.4" fill="#afb1b3"/><rect x="21" y="7" width="5" height="3.4" fill="#afb1b3"/></svg>
<div style="position:absolute;left:7px;top:1775px;transform-origin:0 0;transform:rotate(-90deg);font:23.2px/27.2px 'Liberation Sans', sans-serif;color:#afafaf;white-space:pre">Structure</div>
<svg style="position:absolute;left:12px;top:1788px;" width="18" height="18" viewBox="0 0 18 18"><rect x="0" y="10" width="8" height="8" fill="#afb1b3"/><rect x="10" y="10" width="8" height="8" fill="#afb1b3"/><rect x="10" y="0" width="8" height="8" fill="#afb1b3"/></svg>
<div style="position:absolute;left:7px;top:1968px;transform-origin:0 0;transform:rotate(-90deg);font:23.2px/27.2px 'Liberation Sans', sans-serif;color:#afafaf;white-space:pre">Bookmarks</div>
<svg style="position:absolute;left:12px;top:1978px;" width="18" height="22" viewBox="0 0 18 22"><path d="M0,0 H18 V22 L9,15 L0,22 Z" fill="#afb1b3"/></svg>
<svg style="position:absolute;left:3809px;top:136px;" width="22" height="26" viewBox="0 0 22 26"><ellipse cx="11" cy="4" rx="10" ry="3.5" fill="#afb1b3"/><path d="M1,7 C1,11 21,11 21,7 V11 C21,15 1,15 1,11 Z" fill="#afb1b3"/><path d="M1,14 C1,18 21,18 21,14 V18 C21,22 1,22 1,18 Z" fill="#afb1b3"/><path d="M1,21 C1,25 21,25 21,21 V22 C21,26 1,26 1,22 Z" fill="#afb1b3"/></svg>
<div style="position:absolute;left:3832px;top:170px;transform-origin:0 0;transform:rotate(90deg);font:23.2px/27.2px 'Liberation Sans', sans-serif;color:#afafaf;white-space:pre">Database</div>
<svg style="position:absolute;left:3810px;top:313px;" width="22" height="26" viewBox="0 0 22 26"><path d="M11,1 C5,1 3,6 3,11 V17 L1,20 H21 L19,17 V11 C19,6 17,1 11,1 Z" fill="#afb1b3"/><path d="M8,22 H14 L11,26 Z" fill="#afb1b3"/></svg>
<div style="position:absolute;left:3832px;top:346px;transform-origin:0 0;transform:rotate(90deg);font:23.2px/27.2px 'Liberation Sans', sans-serif;color:#afafaf;white-space:pre">Notifications</div>
<svg style="position:absolute;left:3810px;top:1922px;" width="20" height="17" viewBox="0 0 20 17"><path d="M0,17 V0 H4 L10,7 L16,0 H20 V17 H15 V8 L10,13 L5,8 V17 Z" fill="#afb1b3"/></svg>
<div style="position:absolute;left:3832px;top:1951px;transform-origin:0 0;transform:rotate(90deg);font:23.2px/27.2px 'Liberation Sans', sans-serif;color:#afafaf;white-space:pre">make</div>
<svg style="position:absolute;left:61px;top:2037px;" width="20" height="24" viewBox="0 0 20 24"><circle cx="4" cy="4" r="3.3" fill="#afb1b3"/><circle cx="4" cy="21" r="3.3" fill="#afb1b3"/><circle cx="16" cy="6" r="3.3" fill="#afb1b3"/><path d="M4,4 V21 M16,6 C16,13 6,13 4,18" stroke="#afb1b3" stroke-width="2.6" fill="none"/></svg>
<div style="position:absolute;left:92px;top:2035px;font:normal 23px/28px 'Liberation Sans', sans-serif;color:#bbbbbb;white-space:pre;">Git</div>
<svg style="position:absolute;left:161px;top:2037px;" width="23" height="24" viewBox="0 0 23 24"><circle cx="9.5" cy="9.5" r="7.3" fill="none" stroke="#afb1b3" stroke-width="3"/><path d="M15,15 L22,22" stroke="#afb1b3" stroke-width="3.4"/></svg>
<div style="position:absolute;left:194px;top:2035px;font:normal 23px/28px 'Liberation Sans', sans-serif;color:#bbbbbb;white-space:pre;">Find</div>
<svg style="position:absolute;left:277px;top:2037px;" width="18" height="24" viewBox="0 0 18 24"><polygon points="1,3 17,12 1,21" fill="#afb1b3"/></svg>
<div style="position:absolute;left:308px;top:2035px;font:normal 23px/28px 'Liberation Sans', sans-serif;color:#bbbbbb;white-space:pre;">Run</div>
<svg style="position:absolute;left:388px;top:2037px;" width="22" height="24" viewBox="0 0 22 24"><ellipse cx="11" cy="13.5" rx="8" ry="10" fill="#afb1b3"/><path d="M6,1 L9,5 M16,1 L13,5 M0,10 H4 M18,10 H22 M0,17 H4 M18,17 H22" stroke="#afb1b3" stroke-width="2.4"/></svg>
<div style="position:absolute;left:420px;top:2035px;font:normal 23px/28px 'Liberation Sans', sans-serif;color:#bbbbbb;white-space:pre;">Debug</div>
<svg style="position:absolute;left:530px;top:2037px;" width="20" height="24" viewBox="0 0 20 24"><rect x="0" y="2" width="4" height="4" fill="#afb1b3"/><rect x="6" y="2" width="14" height="4" fill="#afb1b3"/><rect x="0" y="10" width="4" height="4" fill="#afb1b3"/><rect x="6" y="10" width="14" height="4" fill="#afb1b3"/><rect x="0" y="18" width="4" height="4" fill="#afb1b3"/><rect x="6" y="18" width="14" height="4" fill="#afb1b3"/></svg>
<div style="position:absolute;left:561px;top:2035px;font:normal 23px/28px 'Liberation Sans', sans-serif;color:#bbbbbb;white-space:pre;">TODO</div>
<svg style="position:absolute;left:666px;top:2037px;" width="22" height="24" viewBox="0 0 22 24"><circle cx="11" cy="12" r="10.5" fill="#afb1b3"/><rect x="9.4" y="5" width="3.2" height="8" fill="#333436"/><rect x="9.4" y="15.5" width="3.2" height="3.2" fill="#333436"/></svg>
<div style="position:absolute;left:698px;top:2035px;font:normal 23px/28px 'Liberation Sans', sans-serif;color:#bbbbbb;white-space:pre;">Problems</div>
<svg style="position:absolute;left:840px;top:2037px;" width="22" height="24" viewBox="0 0 22 24"><rect x="0" y="1" width="22" height="20" fill="#afb1b3"/><path d="M3,5 L8,9 L3,13" stroke="#333436" stroke-width="2" fill="none"/><rect x="10" y="15" width="8" height="2" fill="#333436"/></svg>
<div style="position:absolute;left:873px;top:2035px;font:normal 23px/28px 'Liberation Sans', sans-serif;color:#bbbbbb;white-space:pre;">Terminal</div>
<svg style="position:absolute;left:1002px;top:2037px;" width="26" height="24" viewBox="0 0 26 24"><polygon points="6,0 19,0 25,12 19,24 6,24 0,12" fill="#afb1b3"/><polygon points="9,6 18,12 9,18" fill="#333436"/></svg>
<div style="position:absolute;left:1036px;top:2035px;font:normal 23px/28px 'Liberation Sans', sans-serif;color:#bbbbbb;white-space:pre;">Services</div>
<svg style="position:absolute;left:24px;top:2078px;" width="25" height="24" viewBox="0 0 25 24"><path d="M5,1 H24 V19 H5 Z" fill="none" stroke="#afb1b3" stroke-width="2"/><path d="M1,5 V23 H19" fill="none" stroke="#afb1b3" stroke-width="2"/></svg>
<div style="position:absolute;left:87px;top:2076px;font:normal 23.2px/28px 'Liberation Sans', sans-serif;color:#bbbbbb;white-space:pre;">Tests passed: 1 (yesterday 15:52)</div>
<div style="position:absolute;left:3413px;top:2076px;font:normal 23.2px/28px 'Liberation Sans', sans-serif;color:#bbbbbb;white-space:pre;">1:1</div>
<div style="position:absolute;left:3466px;top:2076px;font:normal 23.2px/28px 'Liberation Sans', sans-serif;color:#bbbbbb;white-space:pre;">LF</div>
<div style="position:absolute;left:3516px;top:2076px;font:normal 23.2px/28px 'Liberation Sans', sans-serif;color:#bbbbbb;white-space:pre;">UTF-8</div>
<div style="position:absolute;left:3608px;top:2076px;font:normal 23.2px/28px 'Liberation Sans', sans-serif;color:#bbbbbb;white-space:pre;">Tab</div>
<div style="position:absolute;left:3704px;top:2076px;font:normal 23.2px/28px 'Liberation Sans', sans-serif;color:#bbbbbb;white-space:pre;">temp2</div>
<svg style="position:absolute;left:3673px;top:2075px;" width="22" height="30" viewBox="0 0 22 30"><circle cx="4.5" cy="4.5" r="3.6" fill="#afb1b3"/><circle cx="4.5" cy="25.5" r="3.6" fill="#afb1b3"/><circle cx="16.5" cy="6.8" r="3.6" fill="#afb1b3"/><path d="M4.5,4.5 V25.5 M16.5,6.8 C16.5,15 7,15 4.5,19" stroke="#afb1b3" stroke-width="3.2" fill="none"/></svg>
<svg style="position:absolute;left:3788px;top:2076px;" width="26" height="26" viewBox="0 0 26 26"><path d="M3.2,12 V7.5 C3.2,4.5 5.5,2.5 8,2.5 C10.5,2.5 12.8,4.5 12.8,7.5 V12" fill="none" stroke="#afb1b3" stroke-width="3"/><rect x="8" y="11.5" width="16" height="12.5" fill="#afb1b3"/></svg>
<div style="position:absolute;left:992px;top:605px;width:16px;height:619px;background:#4b4c4e;border-radius:8px;box-shadow:0 0 0 1px #2e2f30"></div>
<div style="position:absolute;left:222px;top:785px;width:753px;height:1072px;border:6px solid #fd2216;border-radius:12px"></div>
<svg style="position:absolute;left:1030px;top:1575px;" width="240" height="95" viewBox="0 0 240 95"><path d="M9,23 L67,6 L57,22 L228,78 C233,80 235,85 231,88 C229,90 227,90 225,89 L50,50 L50,67 Z" fill="#fd2216"/></svg>
</div>
<div style="position:absolute;left:0;top:0;width:3840px;height:2110px;box-sizing:border-box;border:2px solid #5a5a5a;border-top-color:#8a8a8a;border-radius:20px;pointer-events:none"></div>
</body></html>
